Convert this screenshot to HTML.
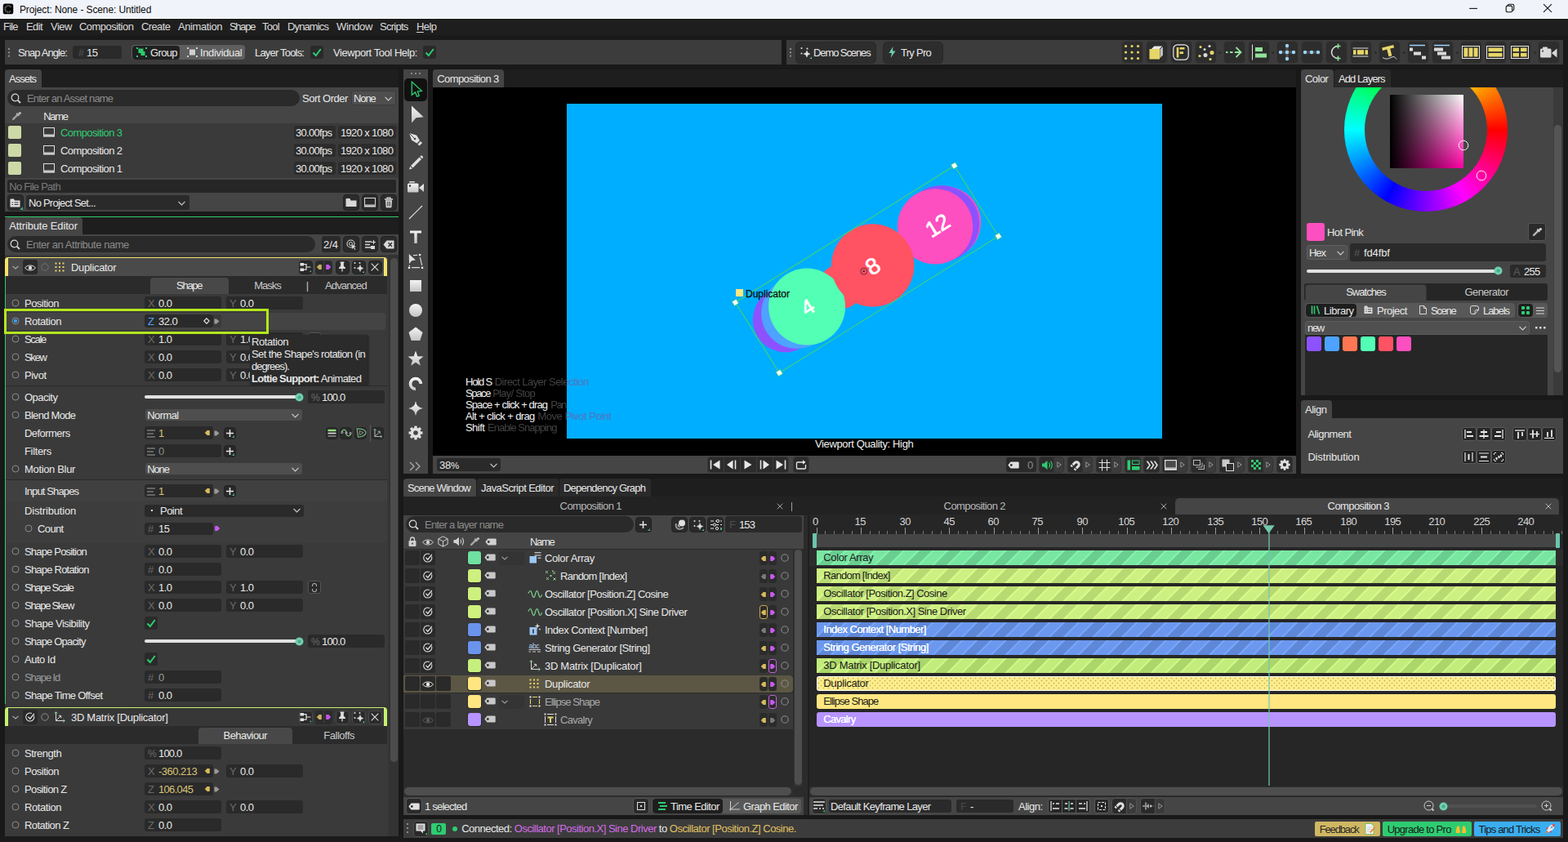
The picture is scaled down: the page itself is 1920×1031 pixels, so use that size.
<!DOCTYPE html>
<html lang="en"><head><meta charset="utf-8"><title>Project: None - Scene: Untitled</title>
<style>
*{box-sizing:border-box;margin:0;padding:0}
html,body{width:1920px;height:1031px;overflow:hidden;background:#191919}
body{font:13px "Liberation Sans",sans-serif;letter-spacing:-0.5px;color:#e8e8e8;position:relative}
.a{position:absolute;display:block}
.t{position:absolute;white-space:nowrap;line-height:20px;height:20px}
u{text-decoration:underline;text-underline-offset:2px}
b{font-weight:bold}
</style></head><body>
<!-- s_top -->
<div class="a" style="left:0px;top:0px;width:1920px;height:23px;background:#f0f3f9"></div>
<div class="a" style="left:0px;top:22px;width:1920px;height:1px;background:#fdfdfe"></div>
<svg class="a" style="left:3px;top:4px" width="14" height="14" viewBox="0 0 14 14"><rect x="0.75" y="0.5" width="12.5" height="12.800" rx="2.600" fill="#050505"/><path d="M10.300 4.600A3.900 3.900 0 1 0 10.300 9.300" fill="none" stroke="#8a8a8a" stroke-width="1.900" stroke-dasharray="0.9 0.7"/></svg>
<div class="t" style="top:2px;left:23.9px;color:#0a0a0a;font-size:12px;letter-spacing:-0.11px">Project: None - Scene: Untitled</div>
<svg class="a" style="left:1798px;top:4px" width="12" height="12" viewBox="0 0 12 12"><path d="M1.2 6.4H11" stroke="#111" stroke-width="1.1" fill="none"/></svg>
<svg class="a" style="left:1843px;top:4px" width="12" height="12" viewBox="0 0 12 12"><rect x="1.2" y="3.1" width="7.5" height="7.700" rx="1.600" fill="none" stroke="#111" stroke-width="1.1"/><path d="M3.400 3V2.600A1.400 1.400 0 0 1 4.800 1.200H8.900A1.900 1.900 0 0 1 10.800 3.100V7.300A1.500 1.500 0 0 1 9.300 8.800H8.900" fill="none" stroke="#111" stroke-width="1.1"/></svg>
<svg class="a" style="left:1889px;top:4px" width="12" height="12" viewBox="0 0 12 12"><path d="M1.100 1.100L10.900 10.900M10.900 1.100L1.100 10.900" stroke="#111" stroke-width="1.1" fill="none"/></svg>
<div class="a" style="left:0px;top:23px;width:1920px;height:20px;background:#1e1e1e"></div>
<div class="t" style="top:23px;left:4px;color:#dcdcdc;letter-spacing:-0.8px">File</div>
<div class="t" style="top:23px;left:32px;color:#dcdcdc;letter-spacing:-0.6px">Edit</div>
<div class="t" style="top:23px;left:62px;color:#dcdcdc;letter-spacing:-0.5px">View</div>
<div class="t" style="top:23px;left:97px;color:#dcdcdc;letter-spacing:-0.54px">Composition</div>
<div class="t" style="top:23px;left:173px;color:#dcdcdc;letter-spacing:-0.62px">Create</div>
<div class="t" style="top:23px;left:218px;color:#dcdcdc;letter-spacing:-0.42px">Animation</div>
<div class="t" style="top:23px;left:281px;color:#dcdcdc;letter-spacing:-1.3px">Shape</div>
<div class="t" style="top:23px;left:321px;color:#dcdcdc;letter-spacing:-0.73px">Tool</div>
<div class="t" style="top:23px;left:352px;color:#dcdcdc;letter-spacing:-0.87px">Dynamics</div>
<div class="t" style="top:23px;left:412px;color:#dcdcdc;letter-spacing:-0.38px">Window</div>
<div class="t" style="top:23px;left:465px;color:#dcdcdc;letter-spacing:-0.73px">Scripts</div>
<div class="t" style="top:23px;left:510px;color:#dcdcdc;letter-spacing:-0.57px"><u>H</u>elp</div>
<div class="a" style="left:6px;top:49px;width:951px;height:30px;background:#3c3c3c"></div>
<div class="a" style="left:963px;top:49px;width:951px;height:30px;background:#3c3c3c"></div>
<svg class="a" style="left:10px;top:59px" width="3" height="14" viewBox="0 0 3 14"><rect x="0" y="0" width="2" height="2" fill="#8a8a8a"/><rect x="0" y="4.300" width="2" height="2" fill="#8a8a8a"/><rect x="0" y="8.600" width="2" height="2" fill="#8a8a8a"/></svg>
<svg class="a" style="left:967px;top:59px" width="3" height="14" viewBox="0 0 3 14"><rect x="0" y="0" width="2" height="2" fill="#8a8a8a"/><rect x="0" y="4.300" width="2" height="2" fill="#8a8a8a"/><rect x="0" y="8.600" width="2" height="2" fill="#8a8a8a"/></svg>
<div class="t" style="top:55px;left:22px;color:#e8e8e8;letter-spacing:-0.92px">Snap Angle:</div>
<div class="a" style="left:89px;top:56px;width:60px;height:16px;background:#2a2a2a;border-radius:3px"></div>
<div class="t" style="top:55px;left:96px;color:#585858;font-size:12px">#</div>
<div class="t" style="top:55px;left:106px;color:#e8e8e8">15</div>
<div class="a" style="left:161px;top:55px;width:139px;height:18px;background:#5e5e5e;border-radius:4px"></div>
<div class="a" style="left:161.5px;top:55.5px;width:58.5px;height:17px;background:#202020;border-radius:4px"></div>
<svg class="a" style="left:167px;top:58px" width="13" height="12" viewBox="0 0 13 12"><rect x="2.5" y="1.5" width="6" height="5.5" fill="#2ecc71"/><rect x="5.5" y="5" width="5" height="5" fill="#2ecc71"/><rect x="0" y="0" width="2" height="2" fill="#2ecc71"/><rect x="11" y="0" width="2" height="2" fill="#2ecc71"/><rect x="0" y="10" width="2" height="2" fill="#2ecc71"/><rect x="11" y="10" width="2" height="2" fill="#2ecc71"/></svg>
<div class="t" style="top:55px;left:184px;color:#e8e8e8;letter-spacing:-0.65px">Group</div>
<svg class="a" style="left:229px;top:58px" width="13" height="12" viewBox="0 0 13 12"><rect x="3" y="2.5" width="7" height="7" fill="#d0d0d0"/><rect x="0" y="0" width="2" height="2" fill="#d0d0d0"/><rect x="11" y="0" width="2" height="2" fill="#d0d0d0"/><rect x="0" y="10" width="2" height="2" fill="#d0d0d0"/><rect x="11" y="10" width="2" height="2" fill="#d0d0d0"/></svg>
<div class="t" style="top:55px;left:245px;color:#e8e8e8;letter-spacing:-0.36px">Individual</div>
<div class="t" style="top:55px;left:312px;color:#e8e8e8;letter-spacing:-0.81px">Layer Tools:</div>
<div class="a" style="left:380px;top:56px;width:16px;height:16px;background:#2a2a2a;border-radius:3px"></div><svg class="a" style="left:382px;top:58px" width="12" height="12" viewBox="0 0 12 12"><path d="M1.5 6.5L4.8 10L10.8 2" stroke="#2ecc71" stroke-width="2" fill="none"/></svg>
<div class="t" style="top:55px;left:408px;color:#e8e8e8;letter-spacing:-0.45px">Viewport Tool Help:</div>
<div class="a" style="left:518px;top:56px;width:16px;height:16px;background:#2a2a2a;border-radius:3px"></div><svg class="a" style="left:520px;top:58px" width="12" height="12" viewBox="0 0 12 12"><path d="M1.5 6.5L4.8 10L10.8 2" stroke="#2ecc71" stroke-width="2" fill="none"/></svg>
<div class="a" style="left:974.4px;top:50.5px;width:99px;height:27px;background:#2d2d2d;border-radius:5px;border:1px solid #282828"></div>
<svg class="a" style="left:979px;top:57px" width="15" height="15" viewBox="0 0 15 15"><path d="M9 5Q9.400 8.600 13 9Q9.400 9.400 9 13Q8.600 9.400 5 9Q8.600 8.600 9 5Z" fill="#e8e8e8" stroke="#e8e8e8" stroke-width="0.6"/><circle cx="2.500" cy="2" r="1.100" fill="#d8d8d8"/><circle cx="9.500" cy="2.500" r="1.100" fill="#d8d8d8"/><circle cx="2.500" cy="8.500" r="1.100" fill="#d8d8d8"/><path d="M15 15V12.500L12.500 15Z" fill="#5cc8a4"/></svg>
<div class="t" style="top:55px;left:996px;color:#e8e8e8;letter-spacing:-1.09px">Demo Scenes</div>
<div class="a" style="left:1081.4px;top:50.5px;width:74px;height:27px;background:#2d2d2d;border-radius:5px;border:1px solid #282828"></div>
<svg class="a" style="left:1088px;top:57px" width="9" height="14" viewBox="0 0 9 14"><path d="M5.5 0L0.5 8H4L2.5 14L8.5 5.5H5Z" fill="#6fcfb0"/></svg>
<div class="t" style="top:55px;left:1103px;color:#e8e8e8;letter-spacing:-0.73px">Try Pro</div>
<div class="a" style="left:1372.5px;top:50px;width:27px;height:28px;background:#2d2d2d;border-radius:5px;border:1px solid #383838"></div>
<svg class="a" style="left:1375px;top:53px" width="22" height="22" viewBox="0 0 22 22"><circle cx="3.5" cy="3.5" r="1.6" fill="#e6d668"/><circle cx="3.5" cy="11.0" r="1.6" fill="#e6d668"/><circle cx="3.5" cy="18.5" r="1.6" fill="#e6d668"/><circle cx="11.0" cy="3.5" r="1.6" fill="#e6d668"/><circle cx="11.0" cy="11.0" r="1.6" fill="#e6d668"/><circle cx="11.0" cy="18.5" r="1.6" fill="#e6d668"/><circle cx="18.5" cy="3.5" r="1.6" fill="#e6d668"/><circle cx="18.5" cy="11.0" r="1.6" fill="#e6d668"/><circle cx="18.5" cy="18.5" r="1.6" fill="#e6d668"/></svg>
<div class="a" style="left:1402.5px;top:50px;width:27px;height:28px;background:#2d2d2d;border-radius:5px;border:1px solid #383838"></div>
<svg class="a" style="left:1405px;top:53px" width="22" height="22" viewBox="0 0 22 22"><path d="M3.5 7.5L8 3H19.5V15L15 19.5Z" fill="#2a2a2a"/><path d="M4.8 7L8.3 3.6H18.2L14.8 7Z" fill="#e8e8e8"/><path d="M15.4 7.6L18.9 4.2V14.6L15.4 18.2Z" fill="#c4c4c4"/><rect x="2.5" y="7" width="12.5" height="12.5" fill="#e6d668"/></svg>
<div class="a" style="left:1432.5px;top:50px;width:27px;height:28px;background:#2d2d2d;border-radius:5px;border:1px solid #383838"></div>
<svg class="a" style="left:1435px;top:53px" width="22" height="22" viewBox="0 0 22 22"><rect x="1.8" y="1.8" width="18.4" height="18.4" rx="5" fill="none" stroke="#e8e8e8" stroke-width="1.2"/><path d="M7 5V17.5" stroke="#e6d668" stroke-width="2.6" fill="none"/><path d="M9.5 6.3H15.5M9.5 11.6H14" stroke="#e6d668" stroke-width="2.6" fill="none"/></svg>
<div class="a" style="left:1462.5px;top:50px;width:27px;height:28px;background:#2d2d2d;border-radius:5px;border:1px solid #383838"></div>
<svg class="a" style="left:1465px;top:53px" width="22" height="22" viewBox="0 0 22 22"><circle cx="5" cy="4.5" r="1.5" fill="#e6d668"/><circle cx="16" cy="3.5" r="1.6" fill="#d8d8d8"/><circle cx="10" cy="7.5" r="1.5" fill="#d8d8d8"/><circle cx="19" cy="11.5" r="2.5" fill="#e6d668"/><circle cx="4" cy="15.5" r="1.6" fill="#e6d668"/><circle cx="11" cy="14.500" r="2.5" fill="#d8d8d8"/><circle cx="17" cy="19.500" r="1.6" fill="#e6d668"/></svg>
<div class="a" style="left:1492px;top:63px;width:3px;height:3px;background:#2a2a2a;border-radius:2px"></div>
<div class="a" style="left:1497.5px;top:50px;width:27px;height:28px;background:#2d2d2d;border-radius:5px;border:1px solid #383838"></div>
<svg class="a" style="left:1500px;top:53px" width="22" height="22" viewBox="0 0 22 22"><path d="M1 11H3.5M6 11H9.5M12 11H19M13.5 5L19.5 11L13.5 17" stroke="#8fe39a" stroke-width="1.8" fill="none"/></svg>
<div class="a" style="left:1527.5px;top:50px;width:27px;height:28px;background:#2d2d2d;border-radius:5px;border:1px solid #383838"></div>
<svg class="a" style="left:1530px;top:53px" width="22" height="22" viewBox="0 0 22 22"><path d="M3.5 1.5V20.500" stroke="#e0e0e0" stroke-width="1"/><rect x="7" y="5" width="9" height="5" fill="#8fe39a"/><rect x="7" y="12.500" width="14" height="5" fill="#8fe39a"/></svg>
<div class="a" style="left:1557px;top:63px;width:3px;height:3px;background:#2a2a2a;border-radius:2px"></div>
<div class="a" style="left:1562.5px;top:50px;width:27px;height:28px;background:#2d2d2d;border-radius:5px;border:1px solid #383838"></div>
<svg class="a" style="left:1565px;top:53px" width="22" height="22" viewBox="0 0 22 22"><path d="M11 3V19M3 11H19" stroke="#4c4c4c" stroke-width="3.5"/><circle cx="11" cy="3" r="2.200" fill="#9cd4ff"/><circle cx="11" cy="19" r="2.200" fill="#9cd4ff"/><circle cx="3" cy="11" r="2.200" fill="#9cd4ff"/><circle cx="19" cy="11" r="2.200" fill="#9cd4ff"/><circle cx="11" cy="11" r="2.200" fill="#9cd4ff"/></svg>
<div class="a" style="left:1592.5px;top:50px;width:27px;height:28px;background:#2d2d2d;border-radius:5px;border:1px solid #383838"></div>
<svg class="a" style="left:1595px;top:53px" width="22" height="22" viewBox="0 0 22 22"><path d="M3 11H19" stroke="#4c4c4c" stroke-width="3.500"/><circle cx="3" cy="11" r="2.200" fill="#9cd4ff"/><circle cx="11" cy="11" r="2.200" fill="#9cd4ff"/><circle cx="19" cy="11" r="2.200" fill="#9cd4ff"/></svg>
<div class="a" style="left:1622.5px;top:50px;width:27px;height:28px;background:#2d2d2d;border-radius:5px;border:1px solid #383838"></div>
<svg class="a" style="left:1625px;top:53px" width="22" height="22" viewBox="0 0 22 22"><path d="M13.500 3.500A8 7.500 0 0 0 13.500 18.500" stroke="#e0e0e0" stroke-width="1.500" fill="none"/><path d="M13.500 0.5V6.500M10.500 3.500H16.500M13.500 15.500V21.500M10.500 18.500H16.500" stroke="#8fe39a" stroke-width="1.500"/></svg>
<div class="a" style="left:1652.5px;top:50px;width:27px;height:28px;background:#2d2d2d;border-radius:5px;border:1px solid #383838"></div>
<svg class="a" style="left:1655px;top:53px" width="22" height="22" viewBox="0 0 22 22"><path d="M1.500 6H20.500M1.500 16H20.500" stroke="#e0e0e0" stroke-width="1"/><rect x="2" y="8.200" width="3.500" height="5.600" fill="#e6d668"/><rect x="7" y="8.200" width="8" height="5.600" fill="#e6d668"/><rect x="16.500" y="8.200" width="3.500" height="5.600" fill="#e6d668"/></svg>
<div class="a" style="left:1683px;top:63px;width:3px;height:3px;background:#2a2a2a;border-radius:2px"></div>
<div class="a" style="left:1687.5px;top:50px;width:27px;height:28px;background:#2d2d2d;border-radius:5px;border:1px solid #383838"></div>
<svg class="a" style="left:1690px;top:53px" width="22" height="22" viewBox="0 0 22 22"><g transform="rotate(-14 11 10)"><path d="M3.500 3.500H18V7H13V16H9V7H3.500Z" fill="#e6d668"/></g><path d="M3 17.500C7 20 10 19 13 17.500S18 16 20 19.500" stroke="#e0e0e0" stroke-width="1" fill="none"/></svg>
<div class="a" style="left:1718px;top:63px;width:3px;height:3px;background:#2a2a2a;border-radius:2px"></div>
<div class="a" style="left:1722.5px;top:50px;width:27px;height:28px;background:#2d2d2d;border-radius:5px;border:1px solid #383838"></div>
<svg class="a" style="left:1725px;top:53px" width="22" height="22" viewBox="0 0 22 22"><path d="M1 2.500H20" stroke="#9cd4ff" stroke-width="1.500"/><rect x="1" y="5.500" width="4" height="4" fill="#d8d8d8"/><rect x="6" y="10.500" width="9" height="4" fill="#d8d8d8"/><rect x="16" y="15.500" width="5" height="4" fill="#d8d8d8"/></svg>
<div class="a" style="left:1752.5px;top:50px;width:27px;height:28px;background:#2d2d2d;border-radius:5px;border:1px solid #383838"></div>
<svg class="a" style="left:1755px;top:53px" width="22" height="22" viewBox="0 0 22 22"><path d="M1 2.500H20" stroke="#9cd4ff" stroke-width="1.500"/><rect x="1" y="5.500" width="11" height="4" fill="#d8d8d8"/><rect x="5" y="10.500" width="11" height="4" fill="#d8d8d8"/><rect x="10" y="15.500" width="11" height="4" fill="#d8d8d8"/></svg>
<div class="a" style="left:1783px;top:63px;width:3px;height:3px;background:#2a2a2a;border-radius:2px"></div>
<div class="a" style="left:1787.5px;top:50px;width:27px;height:28px;background:#2d2d2d;border-radius:5px;border:1px solid #383838"></div>
<svg class="a" style="left:1790px;top:53px" width="22" height="22" viewBox="0 0 22 22"><rect x="0.5" y="3.500" width="21" height="15" fill="none" stroke="#e8e8e8" stroke-width="1"/><rect x="2.500" y="5.500" width="4.800" height="11" fill="#e6d668"/><rect x="8.600" y="5.500" width="4.800" height="11" fill="#e6d668"/><rect x="14.700" y="5.500" width="4.800" height="11" fill="#e6d668"/></svg>
<div class="a" style="left:1817.5px;top:50px;width:27px;height:28px;background:#2d2d2d;border-radius:5px;border:1px solid #383838"></div>
<svg class="a" style="left:1820px;top:53px" width="22" height="22" viewBox="0 0 22 22"><rect x="0.5" y="3.500" width="21" height="15" fill="none" stroke="#e8e8e8" stroke-width="1"/><rect x="2.500" y="5.500" width="17" height="4.600" fill="#e6d668"/><rect x="2.500" y="11.900" width="17" height="4.600" fill="#e6d668"/></svg>
<div class="a" style="left:1847.5px;top:50px;width:27px;height:28px;background:#2d2d2d;border-radius:5px;border:1px solid #383838"></div>
<svg class="a" style="left:1850px;top:53px" width="22" height="22" viewBox="0 0 22 22"><rect x="0.5" y="3.500" width="21" height="15" fill="none" stroke="#e8e8e8" stroke-width="1"/><rect x="2.500" y="5.500" width="7.500" height="4.600" fill="#e6d668"/><rect x="12" y="5.500" width="7.500" height="4.600" fill="#e6d668"/><rect x="2.500" y="11.900" width="7.500" height="4.600" fill="#e6d668"/><rect x="12" y="11.900" width="7.500" height="4.600" fill="#e6d668"/></svg>
<div class="a" style="left:1878px;top:63px;width:3px;height:3px;background:#2a2a2a;border-radius:2px"></div>
<div class="a" style="left:1882.5px;top:50px;width:27px;height:28px;background:#2d2d2d;border-radius:5px;border:1px solid #383838"></div>
<svg class="a" style="left:1885px;top:53px" width="22" height="22" viewBox="0 0 22 22"><path d="M2.500 6.500H13Q14.500 6.500 14.500 8V16Q14.500 17.500 13 17.500H2.500Q1 17.500 1 16V8Q1 6.500 2.500 6.500Z" fill="#d8d8d8"/><path d="M15 12L21.500 6.500V17.500Z" fill="#d8d8d8"/><rect x="4" y="4.500" width="6" height="2.500" rx="1" fill="#d8d8d8"/><circle cx="4" cy="9.500" r="1" fill="#2d2d2d"/></svg>
<!-- s_left -->
<div class="a" style="left:6px;top:85px;width:482px;height:22px;background:#1e1e1e"></div>
<div class="a" style="left:6px;top:85px;width:45px;height:23px;background:#454545;border-radius:4px 4px 0 0"></div>
<div class="t" style="top:87px;left:11px;color:#e8e8e8;letter-spacing:-0.98px">Assets</div>
<div class="a" style="left:6px;top:107px;width:482px;height:152px;background:#454545"></div>
<div class="a" style="left:9px;top:110px;width:358px;height:20px;background:#2a2a2a;border-radius:10px"></div>
<svg class="a" style="left:13px;top:114px" width="13" height="13" viewBox="0 0 13 13"><circle cx="5.5" cy="5.5" r="4.3" fill="none" stroke="#d8d8d8" stroke-width="1.2"/><path d="M8.8 8.8L12 12" stroke="#d8d8d8" stroke-width="1.8"/></svg>
<div class="t" style="top:111px;left:33px;color:#8a8a8a;letter-spacing:-0.81px">Enter an Asset name</div>
<div class="t" style="top:111px;left:370px;color:#e8e8e8;letter-spacing:-0.49px">Sort Order</div>
<div class="a" style="left:430px;top:111px;width:55px;height:18px;background:#4e4e4e;border-radius:3px;border:1px solid #3c3c3c"></div>
<div class="t" style="top:111px;left:433px;color:#e8e8e8;letter-spacing:-1.1px">None</div>
<svg class="a" style="left:471px;top:118px" width="9" height="6" viewBox="0 0 9 6"><path d="M0.5 0.8L4.5 5L8.5 0.8" fill="none" stroke="#d0d0d0" stroke-width="1.1"/></svg>
<svg class="a" style="left:14px;top:136px" width="12" height="12" viewBox="0 0 12 12"><path d="M0.8 11.200L1.300 9L6.800 3.500L8.500 5.200L3 10.700Z" fill="#b0b0b0" opacity="0.85"/><path d="M6.200 2.600L9.400 5.800" stroke="#b0b0b0" stroke-width="1.700"/><path d="M7.600 4.400L9.600 2Q10.500 1.100 11.200 1.800Q11.900 2.500 11 3.400Z" fill="#b0b0b0" stroke="#b0b0b0" stroke-width="1.200"/></svg>
<div class="t" style="top:133px;left:53.2px;color:#e8e8e8;letter-spacing:-1.3px">Name</div>
<div class="a" style="left:6px;top:151px;width:482px;height:67px;background:#3a3a3a"></div>
<div class="a" style="left:10px;top:154px;width:16px;height:16px;background:#cdd9a6;border-radius:2px"></div>
<svg class="a" style="left:53px;top:156px" width="14" height="12" viewBox="0 0 14 12"><rect x="0.5" y="0.5" width="13" height="8.5" fill="none" stroke="#e0e0e0" stroke-width="1"/><rect x="0" y="9.5" width="14" height="2" fill="#e0e0e0"/></svg>
<div class="t" style="top:153px;left:74px;color:#2ecc71;letter-spacing:-0.59px">Composition 3</div>
<div class="a" style="left:360px;top:154px;width:51px;height:16px;background:#2c2c2c;border-radius:3px"></div>
<div class="t" style="top:153px;left:362px;color:#e8e8e8;letter-spacing:-0.7px">30.00fps</div>
<div class="a" style="left:414px;top:154px;width:71px;height:16px;background:#2c2c2c;border-radius:3px"></div>
<div class="t" style="top:153px;left:417px;color:#e8e8e8;letter-spacing:-0.67px">1920 x 1080</div>
<div class="a" style="left:10px;top:176px;width:16px;height:16px;background:#cdd9a6;border-radius:2px"></div>
<svg class="a" style="left:53px;top:178px" width="14" height="12" viewBox="0 0 14 12"><rect x="0.5" y="0.5" width="13" height="8.5" fill="none" stroke="#e0e0e0" stroke-width="1"/><rect x="0" y="9.5" width="14" height="2" fill="#e0e0e0"/></svg>
<div class="t" style="top:175px;left:74px;color:#e8e8e8;letter-spacing:-0.59px">Composition 2</div>
<div class="a" style="left:360px;top:176px;width:51px;height:16px;background:#2c2c2c;border-radius:3px"></div>
<div class="t" style="top:175px;left:362px;color:#e8e8e8;letter-spacing:-0.7px">30.00fps</div>
<div class="a" style="left:414px;top:176px;width:71px;height:16px;background:#2c2c2c;border-radius:3px"></div>
<div class="t" style="top:175px;left:417px;color:#e8e8e8;letter-spacing:-0.67px">1920 x 1080</div>
<div class="a" style="left:10px;top:198px;width:16px;height:16px;background:#cdd9a6;border-radius:2px"></div>
<svg class="a" style="left:53px;top:200px" width="14" height="12" viewBox="0 0 14 12"><rect x="0.5" y="0.5" width="13" height="8.5" fill="none" stroke="#e0e0e0" stroke-width="1"/><rect x="0" y="9.5" width="14" height="2" fill="#e0e0e0"/></svg>
<div class="t" style="top:197px;left:74px;color:#e8e8e8;letter-spacing:-0.59px">Composition 1</div>
<div class="a" style="left:360px;top:198px;width:51px;height:16px;background:#2c2c2c;border-radius:3px"></div>
<div class="t" style="top:197px;left:362px;color:#e8e8e8;letter-spacing:-0.7px">30.00fps</div>
<div class="a" style="left:414px;top:198px;width:71px;height:16px;background:#2c2c2c;border-radius:3px"></div>
<div class="t" style="top:197px;left:417px;color:#e8e8e8;letter-spacing:-0.67px">1920 x 1080</div>
<div class="a" style="left:9px;top:220px;width:476px;height:16px;background:#262626;border-radius:2px"></div>
<div class="t" style="top:219px;left:11.3px;color:#7a7a7a;letter-spacing:-0.74px">No File Path</div>
<div class="a" style="left:9px;top:238px;width:20px;height:20px;background:#2b2b2b;border-radius:4px;border:1px solid #222"></div>
<svg class="a" style="left:12px;top:242px" width="13" height="12" viewBox="0 0 13 12"><path d="M0.5 2.5V11.5H12.5V3.5H6L5 1.5H1.5Q0.5 1.5 0.5 2.5Z" fill="#e0e0e0"/><path d="M2.5 6H4M5.5 6H10.5M2.5 8.5H4M5.5 8.5H10.5" stroke="#333" stroke-width="1"/></svg>
<svg class="a" style="left:24px;top:253px" width="4" height="4" viewBox="0 0 4 4"><path d="M4 0V4H0Z" fill="#3fae85"/></svg>
<div class="a" style="left:32px;top:239px;width:200px;height:18px;background:#2a2a2a;border-radius:3px"></div>
<div class="t" style="top:239px;left:35px;color:#e8e8e8;letter-spacing:-0.76px">No Project Set...</div>
<svg class="a" style="left:218px;top:246px" width="9" height="6" viewBox="0 0 9 6"><path d="M0.5 0.8L4.5 5L8.5 0.8" fill="none" stroke="#d0d0d0" stroke-width="1.1"/></svg>
<div class="a" style="left:420px;top:238px;width:20px;height:20px;background:#2b2b2b;border-radius:4px;border:1px solid #222"></div>
<div class="a" style="left:443px;top:238px;width:20px;height:20px;background:#2b2b2b;border-radius:4px;border:1px solid #222"></div>
<div class="a" style="left:466px;top:238px;width:20px;height:20px;background:#2b2b2b;border-radius:4px;border:1px solid #222"></div>
<svg class="a" style="left:423px;top:242px" width="14" height="12" viewBox="0 0 14 12"><path d="M0.5 2V11H13.5V3.5H6.5L5.5 1H1.5Q0.5 1 0.5 2Z" fill="#d8d8d8"/></svg>
<svg class="a" style="left:446px;top:242px" width="14" height="12" viewBox="0 0 14 12"><rect x="0.5" y="0.5" width="13" height="8.5" fill="none" stroke="#d8d8d8" stroke-width="1"/><rect x="0" y="9.5" width="14" height="2" fill="#d8d8d8"/></svg>
<svg class="a" style="left:470px;top:241px" width="12" height="14" viewBox="0 0 12 14"><path d="M1 3H11M4 3V1.2H8V3" stroke="#d8d8d8" stroke-width="1.3" fill="none"/><path d="M2 4.2H10L9.3 13.2H2.7Z" fill="#d8d8d8"/><path d="M4.4 5.8V11.5M6 5.8V11.5M7.6 5.8V11.5" stroke="#333" stroke-width="0.8"/></svg>
<div class="a" style="left:6px;top:265px;width:482px;height:1px;background:#2ecc71"></div>
<div class="a" style="left:6px;top:266px;width:482px;height:22px;background:#1e1e1e"></div>
<div class="a" style="left:6px;top:266px;width:95px;height:21px;background:#454545;border-radius:4px 4px 0 0"></div>
<div class="t" style="top:267px;left:11.3px;color:#e8e8e8;letter-spacing:-0.15px">Attribute Editor</div>
<div class="a" style="left:6px;top:287px;width:482px;height:737px;background:#454545"></div>
<div class="a" style="left:6px;top:312px;width:482px;height:712px;background:#383838"></div>
<div class="a" style="left:9px;top:289px;width:377px;height:20px;background:#2a2a2a;border-radius:10px"></div>
<svg class="a" style="left:12px;top:293px" width="13" height="13" viewBox="0 0 13 13"><circle cx="5.5" cy="5.5" r="4.3" fill="none" stroke="#d8d8d8" stroke-width="1.2"/><path d="M8.8 8.8L12 12" stroke="#d8d8d8" stroke-width="1.8"/></svg>
<div class="t" style="top:290px;left:32px;color:#8a8a8a;letter-spacing:-0.47px">Enter an Attribute name</div>
<div class="a" style="left:394px;top:289px;width:23px;height:20px;background:#2a2a2a;border-radius:3px"></div>
<div class="t" style="top:290px;left:396px;color:#e8e8e8;letter-spacing:-0.05px">2/4</div>
<div class="a" style="left:420px;top:289px;width:20px;height:20px;background:#2b2b2b;border-radius:4px;border:1px solid #222"></div>
<div class="a" style="left:443px;top:289px;width:20px;height:20px;background:#2b2b2b;border-radius:4px;border:1px solid #222"></div>
<div class="a" style="left:466px;top:289px;width:20px;height:20px;background:#2b2b2b;border-radius:4px;border:1px solid #222"></div>
<svg class="a" style="left:424px;top:293px" width="13" height="13" viewBox="0 0 13 13"><circle cx="5.5" cy="5.5" r="4.5" fill="none" stroke="#d8d8d8" stroke-width="1.1"/><circle cx="5.5" cy="5.5" r="2" fill="none" stroke="#d8d8d8" stroke-width="1"/><path d="M6.5 6.5L12 9L9.5 9.8L11.5 12.5L10.5 13L8.8 10.3L7 12Z" fill="#d8d8d8"/></svg>
<svg class="a" style="left:447px;top:294px" width="13" height="12" viewBox="0 0 13 12"><path d="M0 2H8M0 5.5H6M0 9H8" stroke="#d8d8d8" stroke-width="1.5"/><path d="M10.5 0V5M8 2.5H13" stroke="#d8d8d8" stroke-width="1.2"/><rect x="7" y="7" width="5" height="4" fill="#d8d8d8"/></svg>
<svg class="a" style="left:469px;top:294px" width="14" height="11" viewBox="0 0 14 11"><path d="M0.5 5.5L4.5 0.5H13Q13.5 0.5 13.5 1V10Q13.5 10.5 13 10.5H4.5Z" fill="#d8d8d8"/><path d="M6.5 3L11 8M11 3L6.5 8" stroke="#2e2e2e" stroke-width="1.3"/></svg>
<div class="a" style="left:476px;top:312px;width:12px;height:712px;background:#333"></div>
<div class="a" style="left:478px;top:316px;width:9px;height:617px;background:#4c4c4c;border-radius:5px"></div>
<div class="a" style="left:6px;top:315px;width:468px;height:23px;background:#4a4a4a;border-radius:4px 4px 0 0;border-top:1px solid #f5e26b;border-left:4px solid #f5e26b;border-right:4px solid #f5e26b"></div><svg class="a" style="left:15px;top:325px" width="8" height="5" viewBox="0 0 8 5"><path d="M0.5 0.8L4.0 4L7.5 0.8" fill="none" stroke="#b0b0b0" stroke-width="1.1"/></svg><div class="a" style="left:28px;top:318px;width:18px;height:18px;background:#2a2a2a;border-radius:3px"></div><svg class="a" style="left:30px;top:323px;opacity:1" width="14" height="10" viewBox="0 0 14 10"><path d="M0.6 5C3 1 11 1 13.4 5C11 9 3 9 0.6 5Z" fill="none" stroke="#e0e0e0" stroke-width="1"/><circle cx="7" cy="5" r="2.2" fill="#e0e0e0"/></svg><svg class="a" style="left:50px;top:322px" width="10" height="10" viewBox="0 0 10 10"><circle cx="5" cy="5" r="4.2" fill="none" stroke="#707070" stroke-width="1"/></svg><svg class="a" style="left:67px;top:321px" width="12" height="12" viewBox="0 0 12 12"><rect x="0.5" y="0.5" width="2" height="2" fill="#e6d36c"/><rect x="0.5" y="5.0" width="2" height="2" fill="#e6d36c"/><rect x="0.5" y="9.5" width="2" height="2" fill="#e6d36c"/><rect x="5.0" y="0.5" width="2" height="2" fill="#e6d36c"/><rect x="5.0" y="5.0" width="2" height="2" fill="#e6d36c"/><rect x="5.0" y="9.5" width="2" height="2" fill="#e6d36c"/><rect x="9.5" y="0.5" width="2" height="2" fill="#e6d36c"/><rect x="9.5" y="5.0" width="2" height="2" fill="#e6d36c"/><rect x="9.5" y="9.5" width="2" height="2" fill="#e6d36c"/></svg><div class="t" style="top:318px;left:87px;color:#e8e8e8;letter-spacing:-0.33px">Duplicator</div><div class="a" style="left:365.5px;top:318.5px;width:17px;height:17px;background:#2a2a2a;border-radius:4px;border:1px solid #222"></div><svg class="a" style="left:367px;top:321px" width="14" height="12" viewBox="0 0 14 12"><rect x="0.5" y="1" width="4.5" height="3.5" fill="#e0e0e0"/><rect x="0.5" y="7.5" width="4.5" height="3.5" fill="#e0e0e0"/><path d="M5 2.7H8V9.2H5M8 6H13.5" stroke="#e0e0e0" stroke-width="1.2" fill="none"/><path d="M14 12V10L12 12Z" fill="#5cc8a4"/></svg><div class="a" style="left:386px;top:318.5px;width:21px;height:17px;background:#2c2c2c;border-radius:4px"></div><div class="a" style="left:396px;top:319px;width:1px;height:16px;background:#3c3c3c"></div><svg class="a" style="left:387px;top:323px" width="8" height="8" viewBox="0 0 8 8"><path d="M0.800 4L3.700 1H6.300Q6.800 1 6.800 1.500V6.500Q6.800 7 6.300 7H3.700Z" fill="#c8b060"/></svg><svg class="a" style="left:398px;top:323px" width="8" height="8" viewBox="0 0 8 8"><path d="M7.200 4L4.300 1H1.700Q1.200 1 1.200 1.500V6.500Q1.200 7 1.700 7H4.300Z" fill="#c455ea"/></svg><div class="a" style="left:410.5px;top:318.5px;width:17px;height:17px;background:#2a2a2a;border-radius:4px;border:1px solid #222"></div><svg class="a" style="left:414px;top:320px" width="10" height="13" viewBox="0 0 10 13"><path d="M2.5 0.5H7.5V1.5L6.8 2.2V5.5L9 8V9H1V8L3.2 5.5V2.2L2.5 1.5Z" fill="#e0e0e0"/><path d="M5 9V12.5" stroke="#e0e0e0" stroke-width="1.2"/></svg><div class="a" style="left:430.5px;top:318.5px;width:17px;height:17px;background:#2a2a2a;border-radius:4px;border:1px solid #222"></div><svg class="a" style="left:432px;top:320px" width="14" height="14" viewBox="0 0 14 14"><path d="M9 4.500Q9.400 8.100 13 8.500Q9.400 8.900 9 12.500Q8.600 8.900 5 8.500Q8.600 8.100 9 4.500Z" fill="#e0e0e0" stroke="#e0e0e0" stroke-width="0.5"/><circle cx="2.500" cy="2" r="1" fill="#e0e0e0"/><circle cx="8.500" cy="2" r="1" fill="#e0e0e0"/><circle cx="2.500" cy="8" r="1" fill="#e0e0e0"/><path d="M14 14V11.800L11.800 14Z" fill="#5cc8a4"/></svg><div class="a" style="left:450.5px;top:318.5px;width:17px;height:17px;background:#2a2a2a;border-radius:4px;border:1px solid #222"></div><svg class="a" style="left:454px;top:322px" width="10" height="10" viewBox="0 0 10 10"><path d="M0.7 0.7L9.3 9.3M9.3 0.7L0.7 9.3" stroke="#e0e0e0" stroke-width="1.1" fill="none"/></svg>
<div class="a" style="left:6px;top:338px;width:1px;height:524px;background:#2ecc71"></div>
<div class="a" style="left:7px;top:338px;width:467px;height:22px;background:#2b2b2b"></div>
<div class="a" style="left:184px;top:340px;width:96px;height:20px;background:#484848;border-radius:4px 4px 0 0"></div>
<div class="t" style="top:340px;left:31.65px;width:400px;text-align:center;color:#e8e8e8;letter-spacing:-1.3px">Shape</div>
<div class="t" style="top:340px;left:127.51px;width:400px;text-align:center;color:#c8c8c8;letter-spacing:-1.03px">Masks</div>
<div class="t" style="top:340px;left:176.25px;width:400px;text-align:center;color:#c8c8c8">|</div>
<div class="t" style="top:340px;left:223.44px;width:400px;text-align:center;color:#c8c8c8;letter-spacing:-0.89px">Advanced</div>
<div class="a" style="left:7px;top:360px;width:467px;height:502px;background:#3a3a3a;border-radius:0 0 4px 4px"></div>
<svg class="a" style="left:14px;top:366px" width="10" height="10" viewBox="0 0 10 10"><circle cx="5" cy="5" r="4" fill="none" stroke="#8a8a8a" stroke-width="1"/></svg><div class="t" style="top:362px;left:30px;color:#e8e8e8;letter-spacing:-0.54px">Position</div>
<div class="a" style="left:177px;top:363px;width:94px;height:16px;background:#2a2a2a;border-radius:3px"></div><div class="t" style="top:362px;left:181px;color:#6a6a6a">X</div><div class="t" style="top:362px;left:194px;color:#e8e8e8">0.0</div><div class="a" style="left:277px;top:363px;width:94px;height:16px;background:#2a2a2a;border-radius:3px"></div><div class="t" style="top:362px;left:281px;color:#6a6a6a">Y</div><div class="t" style="top:362px;left:294px;color:#e8e8e8">0.0</div>
<div class="a" style="left:7px;top:383px;width:465px;height:21px;background:#444;border-radius:3px"></div>
<svg class="a" style="left:14px;top:388px" width="10" height="10" viewBox="0 0 10 10"><circle cx="5" cy="5" r="4" fill="none" stroke="#8a8a8a" stroke-width="1"/><circle cx="5" cy="5" r="2.2" fill="#3aa0ff"/></svg><div class="t" style="top:384px;left:30px;color:#e8e8e8;letter-spacing:-0.43px">Rotation</div>
<div class="a" style="left:177px;top:385px;width:84px;height:16px;background:#2a2a2a;border-radius:3px"></div>
<div class="t" style="top:384px;left:181px;color:#4aa8ff">Z</div>
<div class="t" style="top:384px;left:194px;color:#e8e8e8">32.0</div>
<svg class="a" style="left:249px;top:389px" width="8" height="8" viewBox="0 0 8 8"><path d="M4 0.8L7.2 4L4 7.2L0.8 4Z" fill="none" stroke="#e0e0e0" stroke-width="1.2"/></svg>
<div class="a" style="left:261px;top:385px;width:10px;height:16px;background:#3a3a3a;border-radius:0 3px 3px 0"></div>
<svg class="a" style="left:262px;top:390px" width="7" height="7" viewBox="0 0 7 7"><path d="M0.5 0.5H3L6.5 3.5L3 6.5H0.5Z" fill="#9a9a9a"/></svg>
<svg class="a" style="left:14px;top:410px" width="10" height="10" viewBox="0 0 10 10"><circle cx="5" cy="5" r="4" fill="none" stroke="#8a8a8a" stroke-width="1"/></svg><div class="t" style="top:406px;left:30px;color:#e8e8e8;letter-spacing:-1.3px">Scale</div>
<div class="a" style="left:177px;top:407px;width:94px;height:16px;background:#2a2a2a;border-radius:3px"></div><div class="t" style="top:406px;left:181px;color:#6a6a6a">X</div><div class="t" style="top:406px;left:194px;color:#e8e8e8">1.0</div><div class="a" style="left:277px;top:407px;width:94px;height:16px;background:#2a2a2a;border-radius:3px"></div><div class="t" style="top:406px;left:281px;color:#6a6a6a">Y</div><div class="t" style="top:406px;left:294px;color:#e8e8e8">1.0</div>
<div class="a" style="left:377px;top:407px;width:16px;height:16px;background:#2a2a2a;border-radius:3px;border:1px solid #555"></div><svg class="a" style="left:381px;top:409.5px" width="8" height="11" viewBox="0 0 8 11"><path d="M1.5 4V3A2.5 2.5 0 0 1 6.5 3V4M1.5 7V8A2.5 2.5 0 0 0 6.5 8V7" fill="none" stroke="#b0b0b0" stroke-width="1.1"/></svg>
<svg class="a" style="left:14px;top:432px" width="10" height="10" viewBox="0 0 10 10"><circle cx="5" cy="5" r="4" fill="none" stroke="#8a8a8a" stroke-width="1"/></svg><div class="t" style="top:428px;left:30px;color:#e8e8e8;letter-spacing:-1.3px">Skew</div>
<div class="a" style="left:177px;top:429px;width:94px;height:16px;background:#2a2a2a;border-radius:3px"></div><div class="t" style="top:428px;left:181px;color:#6a6a6a">X</div><div class="t" style="top:428px;left:194px;color:#e8e8e8">0.0</div><div class="a" style="left:277px;top:429px;width:94px;height:16px;background:#2a2a2a;border-radius:3px"></div><div class="t" style="top:428px;left:281px;color:#6a6a6a">Y</div><div class="t" style="top:428px;left:294px;color:#e8e8e8">0.0</div>
<svg class="a" style="left:14px;top:454px" width="10" height="10" viewBox="0 0 10 10"><circle cx="5" cy="5" r="4" fill="none" stroke="#8a8a8a" stroke-width="1"/></svg><div class="t" style="top:450px;left:30px;color:#e8e8e8;letter-spacing:-0.47px">Pivot</div>
<div class="a" style="left:177px;top:451px;width:94px;height:16px;background:#2a2a2a;border-radius:3px"></div><div class="t" style="top:450px;left:181px;color:#6a6a6a">X</div><div class="t" style="top:450px;left:194px;color:#e8e8e8">0.0</div><div class="a" style="left:277px;top:451px;width:94px;height:16px;background:#2a2a2a;border-radius:3px"></div><div class="t" style="top:450px;left:281px;color:#6a6a6a">Y</div><div class="t" style="top:450px;left:294px;color:#e8e8e8">0.0</div>
<div class="a" style="left:5px;top:378px;width:324px;height:31px;border:3px solid #b4e61e"></div>
<div class="a" style="left:306px;top:410px;width:144px;height:61px;background:#2b2b2b;box-shadow:1px 1px 2px rgba(0,0,0,0.5)"></div>
<div class="t" style="top:409px;left:308px;color:#e8e8e8;letter-spacing:-0.43px">Rotation</div>
<div class="t" style="top:424px;left:308px;color:#e8e8e8;letter-spacing:-0.62px">Set the Shape's rotation (in</div>
<div class="t" style="top:439px;left:308px;color:#e8e8e8;letter-spacing:-1px">degrees).</div>
<div class="t" style="top:454px;left:308px;color:#e8e8e8;letter-spacing:-0.7px"><b>Lottie Support:</b> Animated</div>
<div class="a" style="left:7px;top:472px;width:467px;height:1px;background:#2a2a2a"></div>
<svg class="a" style="left:14px;top:481px" width="10" height="10" viewBox="0 0 10 10"><circle cx="5" cy="5" r="4" fill="none" stroke="#8a8a8a" stroke-width="1"/></svg><div class="t" style="top:477px;left:30px;color:#e8e8e8;letter-spacing:-0.53px">Opacity</div>
<div class="a" style="left:177px;top:484px;width:188px;height:4px;background:#e2e2e2;border-radius:2px"></div><svg class="a" style="left:360.5px;top:480.5px" width="11" height="11" viewBox="0 0 11 11"><circle cx="5.5" cy="5.5" r="5" fill="#6fcfb0"/><circle cx="5.5" cy="5.5" r="2" fill="#4aa88c"/></svg>
<div class="a" style="left:377px;top:478px;width:94px;height:16px;background:#2a2a2a;border-radius:3px"></div><div class="t" style="top:477px;left:381px;color:#6a6a6a;font-size:12px">%</div><div class="t" style="top:477px;left:394px;color:#e8e8e8;letter-spacing:-0.85px">100.0</div>
<svg class="a" style="left:14px;top:503px" width="10" height="10" viewBox="0 0 10 10"><circle cx="5" cy="5" r="4" fill="none" stroke="#8a8a8a" stroke-width="1"/></svg><div class="t" style="top:499px;left:30px;color:#e8e8e8;letter-spacing:-0.72px">Blend Mode</div>
<div class="a" style="left:177px;top:500px;width:194px;height:16px;background:#4e4e4e;border-radius:4px;border:1px solid #3a3a3a"></div><div class="t" style="top:499px;left:180.2px;color:#e8e8e8;letter-spacing:-0.58px">Normal</div><svg class="a" style="left:357px;top:505.5px" width="9" height="6" viewBox="0 0 9 6"><path d="M0.5 0.8L4.5 5L8.5 0.8" fill="none" stroke="#d0d0d0" stroke-width="1.1"/></svg>
<div class="t" style="top:521px;left:30px;color:#e8e8e8;letter-spacing:-0.55px">Deformers</div>
<div class="a" style="left:177px;top:522px;width:84px;height:16px;background:#2a2a2a;border-radius:3px"></div><svg class="a" style="left:180px;top:526px" width="10" height="10" viewBox="0 0 10 10"><path d="M0 1H10M0 5H8M0 9H10" stroke="#a0a0a0" stroke-width="1" fill="none"/></svg><div class="t" style="top:521px;left:194px;color:#d8c476">1</div><svg class="a" style="left:250px;top:526px" width="8" height="8" viewBox="0 0 8 8"><path d="M0.800 4L3.700 1H6.300Q6.800 1 6.800 1.500V6.500Q6.800 7 6.300 7H3.700Z" fill="#d6ba5c"/></svg><svg class="a" style="left:262px;top:527px" width="7" height="7" viewBox="0 0 7 7"><path d="M0.5 0.5H3L6.5 3.5L3 6.5H0.5Z" fill="#9a9a9a"/></svg><div class="a" style="left:273.5px;top:522.5px;width:15px;height:15px;background:#282828;border-radius:4px;border:1px solid #222"></div><svg class="a" style="left:275.5px;top:524.5px" width="11" height="11" viewBox="0 0 11 11"><path d="M5.5 1V10M1 5.5H10" stroke="#e8e8e8" stroke-width="1.5" fill="none"/></svg><svg class="a" style="left:284.0px;top:533.0px" width="3" height="3" viewBox="0 0 3 3"><path d="M3 0V3H0Z" fill="#3fae85"/></svg>
<div class="a" style="left:398.5px;top:522.5px;width:15px;height:15px;background:#2a2a2a;border-radius:4px;border:1px solid #242424"></div><div class="a" style="left:416px;top:522.5px;width:15px;height:15px;background:#2a2a2a;border-radius:4px;border:1px solid #242424"></div><div class="a" style="left:434px;top:522.5px;width:15px;height:15px;background:#2a2a2a;border-radius:4px;border:1px solid #242424"></div><div class="a" style="left:455px;top:522.5px;width:15px;height:15px;background:#2a2a2a;border-radius:4px;border:1px solid #242424"></div><svg class="a" style="left:400.5px;top:524.5px" width="11" height="11" viewBox="0 0 11 11"><path d="M0.5 2H10.500" stroke="#90e080" stroke-width="2.400"/><path d="M0.5 5.500H10.500" stroke="#e0e0e0" stroke-width="1.600"/><path d="M0.5 9H10.500" stroke="#8a8a8a" stroke-width="1.600"/></svg><svg class="a" style="left:416.5px;top:524px" width="14" height="12" viewBox="0 0 14 12"><path d="M1.500 6C1.500 1 7 1 7 6S12.500 11 12.500 6" fill="none" stroke="#6fb07a" stroke-width="1.300"/><circle cx="1.800" cy="5.500" r="1.100" fill="#2a2a2a" stroke="#e0e0e0" stroke-width="0.800"/><circle cx="7" cy="6" r="1.100" fill="#2a2a2a" stroke="#e0e0e0" stroke-width="0.800"/><circle cx="12.200" cy="6.500" r="1.100" fill="#2a2a2a" stroke="#e0e0e0" stroke-width="0.800"/></svg><svg class="a" style="left:435.5px;top:524px" width="13" height="12" viewBox="0 0 13 12"><path d="M1 0.8L2.500 11.200Q12.500 10 12 5Q11 1 1 0.8Z" fill="none" stroke="#6fb07a" stroke-width="1.200"/><path d="M4 3.500L4.500 8.500L9 5.800Z" fill="none" stroke="#8a8a8a" stroke-width="1"/></svg><div class="a" style="left:452.5px;top:519.5px;width:1px;height:21px;background:#5a5a5a"></div><svg class="a" style="left:456px;top:523.5px" width="13" height="13" viewBox="0 0 13 13"><path d="M3 2V10.500H11" fill="none" stroke="#b0b0b0" stroke-width="1.100"/><path d="M3 10.500L9 4.500M6.500 4.200H9.200V7" fill="none" stroke="#b0b0b0" stroke-width="1"/><path d="M1.300 3.200L3 1L4.700 3.200M10 8.800L12 10.500L10 12.200" fill="none" stroke="#6fb07a" stroke-width="1"/></svg>
<div class="t" style="top:543px;left:30px;color:#e8e8e8;letter-spacing:-0.35px">Filters</div>
<div class="a" style="left:177px;top:544px;width:94px;height:16px;background:#2a2a2a;border-radius:3px"></div><svg class="a" style="left:180px;top:548px" width="10" height="10" viewBox="0 0 10 10"><path d="M0 1H10M0 5H8M0 9H10" stroke="#a0a0a0" stroke-width="1" fill="none"/></svg><div class="t" style="top:543px;left:194px;color:#8a8a8a">0</div><div class="a" style="left:273.5px;top:544.5px;width:15px;height:15px;background:#282828;border-radius:4px;border:1px solid #222"></div><svg class="a" style="left:275.5px;top:546.5px" width="11" height="11" viewBox="0 0 11 11"><path d="M5.5 1V10M1 5.5H10" stroke="#e8e8e8" stroke-width="1.5" fill="none"/></svg><svg class="a" style="left:284.0px;top:555.0px" width="3" height="3" viewBox="0 0 3 3"><path d="M3 0V3H0Z" fill="#3fae85"/></svg>
<svg class="a" style="left:14px;top:569px" width="10" height="10" viewBox="0 0 10 10"><circle cx="5" cy="5" r="4" fill="none" stroke="#8a8a8a" stroke-width="1"/></svg><div class="t" style="top:565px;left:30px;color:#e8e8e8;letter-spacing:-0.34px">Motion Blur</div>
<div class="a" style="left:177px;top:566px;width:194px;height:16px;background:#4e4e4e;border-radius:4px;border:1px solid #3a3a3a"></div><div class="t" style="top:565px;left:180.2px;color:#e8e8e8;letter-spacing:-1.1px">None</div><svg class="a" style="left:357px;top:571.5px" width="9" height="6" viewBox="0 0 9 6"><path d="M0.5 0.8L4.5 5L8.5 0.8" fill="none" stroke="#d0d0d0" stroke-width="1.1"/></svg>
<div class="a" style="left:7px;top:587px;width:467px;height:1px;background:#2a2a2a"></div>
<div class="a" style="left:7px;top:588px;width:467px;height:26px;background:#404040"></div>
<div class="t" style="top:592px;left:30px;color:#e8e8e8;letter-spacing:-0.87px">Input Shapes</div>
<div class="a" style="left:177px;top:593px;width:84px;height:16px;background:#2a2a2a;border-radius:3px"></div><svg class="a" style="left:180px;top:597px" width="10" height="10" viewBox="0 0 10 10"><path d="M0 1H10M0 5H8M0 9H10" stroke="#a0a0a0" stroke-width="1" fill="none"/></svg><div class="t" style="top:592px;left:194px;color:#d8c476">1</div><svg class="a" style="left:250px;top:597px" width="8" height="8" viewBox="0 0 8 8"><path d="M0.800 4L3.700 1H6.300Q6.800 1 6.800 1.500V6.500Q6.800 7 6.300 7H3.700Z" fill="#d6ba5c"/></svg><svg class="a" style="left:262px;top:598px" width="7" height="7" viewBox="0 0 7 7"><path d="M0.5 0.5H3L6.5 3.5L3 6.5H0.5Z" fill="#9a9a9a"/></svg><div class="a" style="left:273.5px;top:593.5px;width:15px;height:15px;background:#282828;border-radius:4px;border:1px solid #222"></div><svg class="a" style="left:275.5px;top:595.5px" width="11" height="11" viewBox="0 0 11 11"><path d="M5.5 1V10M1 5.5H10" stroke="#e8e8e8" stroke-width="1.5" fill="none"/></svg><svg class="a" style="left:284.0px;top:604.0px" width="3" height="3" viewBox="0 0 3 3"><path d="M3 0V3H0Z" fill="#3fae85"/></svg>
<div class="a" style="left:7px;top:614px;width:467px;height:50px;background:#3d3d3d"></div>
<div class="t" style="top:616px;left:30px;color:#e8e8e8;letter-spacing:-0.16px">Distribution</div>
<div class="a" style="left:177px;top:618px;width:195px;height:15px;background:#2a2a2a;border-radius:3px"></div>
<div class="a" style="left:185px;top:624px;width:2px;height:2px;background:#e0e0e0"></div>
<div class="t" style="top:616px;left:196px;color:#e8e8e8;letter-spacing:-0.53px">Point</div>
<svg class="a" style="left:359px;top:622px" width="9" height="6" viewBox="0 0 9 6"><path d="M0.5 0.8L4.5 5L8.5 0.8" fill="none" stroke="#d0d0d0" stroke-width="1.1"/></svg>
<svg class="a" style="left:30px;top:642px" width="10" height="10" viewBox="0 0 10 10"><circle cx="5" cy="5" r="4" fill="none" stroke="#8a8a8a" stroke-width="1"/></svg>
<div class="t" style="top:638px;left:46px;color:#e8e8e8;letter-spacing:-0.62px">Count</div>
<div class="a" style="left:177px;top:640px;width:84px;height:15px;background:#2a2a2a;border-radius:3px"></div>
<div class="t" style="top:638px;left:181px;color:#6a6a6a">#</div>
<div class="t" style="top:638px;left:194px;color:#e8e8e8">15</div>
<svg class="a" style="left:262px;top:643px" width="8" height="8" viewBox="0 0 8 8"><path d="M7.200 4L4.300 1H1.700Q1.200 1 1.200 1.500V6.500Q1.200 7 1.700 7H4.300Z" fill="#c85af0"/></svg>
<svg class="a" style="left:14px;top:670px" width="10" height="10" viewBox="0 0 10 10"><circle cx="5" cy="5" r="4" fill="none" stroke="#8a8a8a" stroke-width="1"/></svg><div class="t" style="top:666px;left:30px;color:#e8e8e8;letter-spacing:-0.82px">Shape Position</div>
<div class="a" style="left:177px;top:667px;width:94px;height:16px;background:#2a2a2a;border-radius:3px"></div><div class="t" style="top:666px;left:181px;color:#6a6a6a">X</div><div class="t" style="top:666px;left:194px;color:#e8e8e8">0.0</div><div class="a" style="left:277px;top:667px;width:94px;height:16px;background:#2a2a2a;border-radius:3px"></div><div class="t" style="top:666px;left:281px;color:#6a6a6a">Y</div><div class="t" style="top:666px;left:294px;color:#e8e8e8">0.0</div>
<svg class="a" style="left:14px;top:692px" width="10" height="10" viewBox="0 0 10 10"><circle cx="5" cy="5" r="4" fill="none" stroke="#8a8a8a" stroke-width="1"/></svg><div class="t" style="top:688px;left:30px;color:#e8e8e8;letter-spacing:-0.78px">Shape Rotation</div>
<div class="a" style="left:177px;top:689px;width:94px;height:16px;background:#2a2a2a;border-radius:3px"></div><div class="t" style="top:688px;left:181px;color:#6a6a6a">#</div><div class="t" style="top:688px;left:194px;color:#e8e8e8">0.0</div>
<svg class="a" style="left:14px;top:714px" width="10" height="10" viewBox="0 0 10 10"><circle cx="5" cy="5" r="4" fill="none" stroke="#8a8a8a" stroke-width="1"/></svg><div class="t" style="top:710px;left:30px;color:#e8e8e8;letter-spacing:-1.27px">Shape Scale</div>
<div class="a" style="left:177px;top:711px;width:94px;height:16px;background:#2a2a2a;border-radius:3px"></div><div class="t" style="top:710px;left:181px;color:#6a6a6a">X</div><div class="t" style="top:710px;left:194px;color:#e8e8e8">1.0</div><div class="a" style="left:277px;top:711px;width:94px;height:16px;background:#2a2a2a;border-radius:3px"></div><div class="t" style="top:710px;left:281px;color:#6a6a6a">Y</div><div class="t" style="top:710px;left:294px;color:#e8e8e8">1.0</div>
<div class="a" style="left:377px;top:711px;width:16px;height:16px;background:#2a2a2a;border-radius:3px;border:1px solid #555"></div><svg class="a" style="left:381px;top:713.5px" width="8" height="11" viewBox="0 0 8 11"><path d="M1.5 4V3A2.5 2.5 0 0 1 6.5 3V4M1.5 7V8A2.5 2.5 0 0 0 6.5 8V7" fill="none" stroke="#b0b0b0" stroke-width="1.1"/></svg>
<svg class="a" style="left:14px;top:736px" width="10" height="10" viewBox="0 0 10 10"><circle cx="5" cy="5" r="4" fill="none" stroke="#8a8a8a" stroke-width="1"/></svg><div class="t" style="top:732px;left:30px;color:#e8e8e8;letter-spacing:-1.29px">Shape Skew</div>
<div class="a" style="left:177px;top:733px;width:94px;height:16px;background:#2a2a2a;border-radius:3px"></div><div class="t" style="top:732px;left:181px;color:#6a6a6a">X</div><div class="t" style="top:732px;left:194px;color:#e8e8e8">0.0</div><div class="a" style="left:277px;top:733px;width:94px;height:16px;background:#2a2a2a;border-radius:3px"></div><div class="t" style="top:732px;left:281px;color:#6a6a6a">Y</div><div class="t" style="top:732px;left:294px;color:#e8e8e8">0.0</div>
<svg class="a" style="left:14px;top:758px" width="10" height="10" viewBox="0 0 10 10"><circle cx="5" cy="5" r="4" fill="none" stroke="#8a8a8a" stroke-width="1"/></svg><div class="t" style="top:754px;left:30px;color:#e8e8e8;letter-spacing:-0.53px">Shape Visibility</div>
<div class="a" style="left:177px;top:755px;width:16px;height:16px;background:#2a2a2a;border-radius:3px"></div><svg class="a" style="left:179px;top:757px" width="12" height="12" viewBox="0 0 12 12"><path d="M1.5 6.5L4.8 10L10.8 2" stroke="#2ecc71" stroke-width="2" fill="none"/></svg>
<svg class="a" style="left:14px;top:780px" width="10" height="10" viewBox="0 0 10 10"><circle cx="5" cy="5" r="4" fill="none" stroke="#8a8a8a" stroke-width="1"/></svg><div class="t" style="top:776px;left:30px;color:#e8e8e8;letter-spacing:-0.82px">Shape Opacity</div>
<div class="a" style="left:177px;top:783px;width:188px;height:4px;background:#e2e2e2;border-radius:2px"></div><svg class="a" style="left:360.5px;top:779.5px" width="11" height="11" viewBox="0 0 11 11"><circle cx="5.5" cy="5.5" r="5" fill="#6fcfb0"/><circle cx="5.5" cy="5.5" r="2" fill="#4aa88c"/></svg>
<div class="a" style="left:377px;top:777px;width:94px;height:16px;background:#2a2a2a;border-radius:3px"></div><div class="t" style="top:776px;left:381px;color:#6a6a6a;font-size:12px">%</div><div class="t" style="top:776px;left:394px;color:#e8e8e8;letter-spacing:-0.85px">100.0</div>
<svg class="a" style="left:14px;top:802px" width="10" height="10" viewBox="0 0 10 10"><circle cx="5" cy="5" r="4" fill="none" stroke="#8a8a8a" stroke-width="1"/></svg><div class="t" style="top:798px;left:30px;color:#e8e8e8;letter-spacing:-0.5px">Auto Id</div>
<div class="a" style="left:177px;top:799px;width:16px;height:16px;background:#2a2a2a;border-radius:3px"></div><svg class="a" style="left:179px;top:801px" width="12" height="12" viewBox="0 0 12 12"><path d="M1.5 6.5L4.8 10L10.8 2" stroke="#2ecc71" stroke-width="2" fill="none"/></svg>
<svg class="a" style="left:14px;top:824px" width="10" height="10" viewBox="0 0 10 10"><circle cx="5" cy="5" r="4" fill="none" stroke="#8a8a8a" stroke-width="1"/></svg><div class="t" style="top:820px;left:30px;color:#9a9a9a;letter-spacing:-1.1px">Shape Id</div>
<div class="a" style="left:177px;top:821px;width:94px;height:16px;background:#2a2a2a;border-radius:3px"></div><div class="t" style="top:820px;left:181px;color:#6a6a6a">#</div><div class="t" style="top:820px;left:194px;color:#9a9a9a">0</div>
<svg class="a" style="left:14px;top:846px" width="10" height="10" viewBox="0 0 10 10"><circle cx="5" cy="5" r="4" fill="none" stroke="#8a8a8a" stroke-width="1"/></svg><div class="t" style="top:842px;left:30px;color:#e8e8e8;letter-spacing:-0.71px">Shape Time Offset</div>
<div class="a" style="left:177px;top:843px;width:94px;height:16px;background:#2a2a2a;border-radius:3px"></div><div class="t" style="top:842px;left:181px;color:#6a6a6a">#</div><div class="t" style="top:842px;left:194px;color:#e8e8e8">0.0</div>
<div class="a" style="left:6px;top:866px;width:468px;height:23px;background:#373737;border-radius:4px 4px 0 0;border-top:1px solid #c6f06e;border-left:4px solid #c6f06e;border-right:4px solid #c6f06e"></div><svg class="a" style="left:15px;top:876px" width="8" height="5" viewBox="0 0 8 5"><path d="M0.5 0.8L4.0 4L7.5 0.8" fill="none" stroke="#b0b0b0" stroke-width="1.1"/></svg><div class="a" style="left:28px;top:869px;width:18px;height:18px;background:#2a2a2a;border-radius:3px"></div><svg class="a" style="left:31px;top:872px" width="12" height="12" viewBox="0 0 12 12"><path d="M10.5 4.5A5 5 0 1 1 8 1.6" fill="none" stroke="#e0e0e0" stroke-width="1.1"/><path d="M3.5 5.8L5.8 8.2L10.8 2" fill="none" stroke="#e0e0e0" stroke-width="1.3"/></svg><svg class="a" style="left:50px;top:873px" width="10" height="10" viewBox="0 0 10 10"><circle cx="5" cy="5" r="4.2" fill="none" stroke="#8a8a8a" stroke-width="1"/></svg><svg class="a" style="left:65px;top:870px" width="16" height="16" viewBox="0 0 16 16"><path d="M3.500 2V12.500H14" fill="none" stroke="#d8d8d8" stroke-width="1"/><path d="M3.500 12.500L9.500 6.500M6.800 6.300H9.700V9.200" fill="none" stroke="#d8d8d8" stroke-width="1"/><path d="M1.500 3.800L3.500 1.500L5.500 3.800" fill="none" stroke="#6fc07a" stroke-width="1"/><path d="M12.200 10.500L14.500 12.500L12.200 14.500" fill="none" stroke="#6fc07a" stroke-width="1"/></svg><div class="t" style="top:869px;left:87px;color:#e8e8e8;letter-spacing:-0.29px">3D Matrix [Duplicator]</div><div class="a" style="left:365.5px;top:869.5px;width:17px;height:17px;background:#2a2a2a;border-radius:4px;border:1px solid #4a4a4a"></div><svg class="a" style="left:367px;top:872px" width="14" height="12" viewBox="0 0 14 12"><rect x="0.5" y="1" width="4.5" height="3.5" fill="#e0e0e0"/><rect x="0.5" y="7.5" width="4.5" height="3.5" fill="#e0e0e0"/><path d="M5 2.7H8V9.2H5M8 6H13.5" stroke="#e0e0e0" stroke-width="1.2" fill="none"/><path d="M14 12V10L12 12Z" fill="#5cc8a4"/></svg><div class="a" style="left:386px;top:869.5px;width:21px;height:17px;background:#2c2c2c;border-radius:4px"></div><div class="a" style="left:396px;top:870px;width:1px;height:16px;background:#3c3c3c"></div><svg class="a" style="left:387px;top:874px" width="8" height="8" viewBox="0 0 8 8"><path d="M0.800 4L3.700 1H6.300Q6.800 1 6.800 1.500V6.500Q6.800 7 6.300 7H3.700Z" fill="#c8b060"/></svg><svg class="a" style="left:398px;top:874px" width="8" height="8" viewBox="0 0 8 8"><path d="M7.200 4L4.300 1H1.700Q1.200 1 1.200 1.500V6.500Q1.200 7 1.700 7H4.300Z" fill="#c455ea"/></svg><div class="a" style="left:410.5px;top:869.5px;width:17px;height:17px;background:#2a2a2a;border-radius:4px;border:1px solid #4a4a4a"></div><svg class="a" style="left:414px;top:871px" width="10" height="13" viewBox="0 0 10 13"><path d="M2.5 0.5H7.5V1.5L6.8 2.2V5.5L9 8V9H1V8L3.2 5.5V2.2L2.5 1.5Z" fill="#e0e0e0"/><path d="M5 9V12.5" stroke="#e0e0e0" stroke-width="1.2"/></svg><div class="a" style="left:430.5px;top:869.5px;width:17px;height:17px;background:#2a2a2a;border-radius:4px;border:1px solid #4a4a4a"></div><svg class="a" style="left:432px;top:871px" width="14" height="14" viewBox="0 0 14 14"><path d="M9 4.500Q9.400 8.100 13 8.500Q9.400 8.900 9 12.500Q8.600 8.900 5 8.500Q8.600 8.100 9 4.500Z" fill="#e0e0e0" stroke="#e0e0e0" stroke-width="0.5"/><circle cx="2.500" cy="2" r="1" fill="#e0e0e0"/><circle cx="8.500" cy="2" r="1" fill="#e0e0e0"/><circle cx="2.500" cy="8" r="1" fill="#e0e0e0"/><path d="M14 14V11.800L11.800 14Z" fill="#5cc8a4"/></svg><div class="a" style="left:450.5px;top:869.5px;width:17px;height:17px;background:#2a2a2a;border-radius:4px;border:1px solid #4a4a4a"></div><svg class="a" style="left:454px;top:873px" width="10" height="10" viewBox="0 0 10 10"><path d="M0.7 0.7L9.3 9.3M9.3 0.7L0.7 9.3" stroke="#e0e0e0" stroke-width="1.1" fill="none"/></svg>
<div class="a" style="left:6px;top:889px;width:468px;height:22px;background:#2b2b2b"></div>
<div class="a" style="left:243px;top:891px;width:115px;height:20px;background:#484848;border-radius:4px 4px 0 0"></div>
<div class="t" style="top:891px;left:100.29px;width:400px;text-align:center;color:#e8e8e8;letter-spacing:-0.58px">Behaviour</div>
<div class="t" style="top:891px;left:215.24px;width:400px;text-align:center;color:#c8c8c8;letter-spacing:-0.49px">Falloffs</div>
<div class="a" style="left:6px;top:911px;width:468px;height:113px;background:#3a3a3a;border-radius:4px 4px 0 0"></div>
<svg class="a" style="left:14px;top:917px" width="10" height="10" viewBox="0 0 10 10"><circle cx="5" cy="5" r="4" fill="none" stroke="#8a8a8a" stroke-width="1"/></svg><div class="t" style="top:913px;left:30px;color:#e8e8e8;letter-spacing:-0.5px">Strength</div>
<div class="a" style="left:177px;top:914px;width:94px;height:16px;background:#2a2a2a;border-radius:3px"></div><div class="t" style="top:913px;left:181px;color:#6a6a6a;font-size:12px">%</div><div class="t" style="top:913px;left:194px;color:#e8e8e8;letter-spacing:-0.85px">100.0</div>
<svg class="a" style="left:14px;top:939px" width="10" height="10" viewBox="0 0 10 10"><circle cx="5" cy="5" r="4" fill="none" stroke="#8a8a8a" stroke-width="1"/></svg><div class="t" style="top:935px;left:30px;color:#e8e8e8;letter-spacing:-0.54px">Position</div>
<div class="a" style="left:177px;top:936px;width:84px;height:16px;background:#2a2a2a;border-radius:3px"></div>
<div class="t" style="top:935px;left:181px;color:#6a6a6a">X</div>
<div class="t" style="top:935px;left:194px;color:#d8c476;letter-spacing:-0.51px">-360.213</div>
<svg class="a" style="left:250px;top:940px" width="8" height="8" viewBox="0 0 8 8"><path d="M0.800 4L3.700 1H6.300Q6.800 1 6.800 1.500V6.500Q6.800 7 6.300 7H3.700Z" fill="#d6ba5c"/></svg>
<div class="a" style="left:261px;top:936px;width:10px;height:16px;background:#3a3a3a;border-radius:0 3px 3px 0"></div>
<svg class="a" style="left:262px;top:941px" width="7" height="7" viewBox="0 0 7 7"><path d="M0.5 0.5H3L6.5 3.5L3 6.5H0.5Z" fill="#9a9a9a"/></svg>
<div class="a" style="left:277px;top:936px;width:94px;height:16px;background:#2a2a2a;border-radius:3px"></div><div class="t" style="top:935px;left:281px;color:#6a6a6a">Y</div><div class="t" style="top:935px;left:294px;color:#e8e8e8">0.0</div>
<svg class="a" style="left:14px;top:961px" width="10" height="10" viewBox="0 0 10 10"><circle cx="5" cy="5" r="4" fill="none" stroke="#8a8a8a" stroke-width="1"/></svg><div class="t" style="top:957px;left:30px;color:#e8e8e8;letter-spacing:-0.61px">Position Z</div>
<div class="a" style="left:177px;top:958px;width:84px;height:16px;background:#2a2a2a;border-radius:3px"></div>
<div class="t" style="top:957px;left:181px;color:#6a6a6a">Z</div>
<div class="t" style="top:957px;left:194px;color:#d8c476;letter-spacing:-0.67px">106.045</div>
<svg class="a" style="left:250px;top:962px" width="8" height="8" viewBox="0 0 8 8"><path d="M0.800 4L3.700 1H6.300Q6.800 1 6.800 1.500V6.500Q6.800 7 6.300 7H3.700Z" fill="#d6ba5c"/></svg>
<svg class="a" style="left:262px;top:963px" width="7" height="7" viewBox="0 0 7 7"><path d="M0.5 0.5H3L6.5 3.5L3 6.5H0.5Z" fill="#9a9a9a"/></svg>
<svg class="a" style="left:14px;top:983px" width="10" height="10" viewBox="0 0 10 10"><circle cx="5" cy="5" r="4" fill="none" stroke="#8a8a8a" stroke-width="1"/></svg><div class="t" style="top:979px;left:30px;color:#e8e8e8;letter-spacing:-0.43px">Rotation</div>
<div class="a" style="left:177px;top:980px;width:94px;height:16px;background:#2a2a2a;border-radius:3px"></div><div class="t" style="top:979px;left:181px;color:#6a6a6a">X</div><div class="t" style="top:979px;left:194px;color:#e8e8e8">0.0</div><div class="a" style="left:277px;top:980px;width:94px;height:16px;background:#2a2a2a;border-radius:3px"></div><div class="t" style="top:979px;left:281px;color:#6a6a6a">Y</div><div class="t" style="top:979px;left:294px;color:#e8e8e8">0.0</div>
<svg class="a" style="left:14px;top:1005px" width="10" height="10" viewBox="0 0 10 10"><circle cx="5" cy="5" r="4" fill="none" stroke="#8a8a8a" stroke-width="1"/></svg><div class="t" style="top:1001px;left:30px;color:#e8e8e8;letter-spacing:-0.56px">Rotation Z</div>
<div class="a" style="left:177px;top:1002px;width:94px;height:16px;background:#2a2a2a;border-radius:3px"></div><div class="t" style="top:1001px;left:181px;color:#6a6a6a">Z</div><div class="t" style="top:1001px;left:194px;color:#e8e8e8">0.0</div>
<div class="a" style="left:0px;top:1024px;width:494px;height:7px;background:#1b1b1b"></div>
<!-- s_view -->
<svg width="0" height="0" style="position:absolute"><defs><linearGradient id="ig" x1="0" y1="0" x2="0" y2="1"><stop offset="0" stop-color="#f4f4f4"/><stop offset="1" stop-color="#c4c4c4"/></linearGradient><linearGradient id="ig2" gradientUnits="userSpaceOnUse" x1="0" y1="4" x2="0" y2="20"><stop offset="0" stop-color="#f8f8f8"/><stop offset="1" stop-color="#c8c8c8"/></linearGradient></defs></svg>
<div class="a" style="left:494px;top:85px;width:30px;height:495px;background:#454545"></div>
<svg class="a" style="left:503px;top:89px" width="12" height="3" viewBox="0 0 12 3"><rect x="0" y="0" width="2" height="2" fill="#8a8a8a"/><rect x="5" y="0" width="2" height="2" fill="#8a8a8a"/><rect x="10" y="0" width="2" height="2" fill="#8a8a8a"/></svg>
<div class="a" style="left:495px;top:96px;width:28px;height:28px;background:#111;border-radius:5px"></div><svg class="a" style="left:497px;top:98px" width="24" height="24" viewBox="0 0 24 24"><path d="M7.3 2.2V18.3L11.5 14.9L13.6 20.2L16.3 19.1L14.2 14L19.4 13.3Z" fill="none" stroke="#2ecc71" stroke-width="1.3" stroke-linejoin="miter"/></svg><svg class="a" style="left:497px;top:128px" width="24" height="24" viewBox="0 0 24 24"><path d="M7 1.6V22.400L12.600 16.200L21.600 15.200Z" fill="url(#ig)"/></svg><svg class="a" style="left:497px;top:158px" width="24" height="24" viewBox="0 0 24 24"><path d="M4 5L13 7.5L17 14L13.5 17.5L7 13.5Z" fill="#e0e0e0"/><path d="M14.5 18.5L18 15L20 17L16.5 20.5Z" fill="#e0e0e0"/><path d="M4 5L10.5 11.5" stroke="#454545" stroke-width="1"/><circle cx="11" cy="12" r="1.3" fill="#454545"/></svg><svg class="a" style="left:497px;top:187px" width="24" height="24" viewBox="0 0 24 24"><path d="M4 20.5L5.2 16.8L7.8 19.4Z" fill="#e0e0e0"/><path d="M6 16L16.5 5.5L19 8L8.6 18.5Z" fill="#e0e0e0"/><path d="M17.3 4.7L18.3 3.7Q19 3 19.8 3.8L20.8 4.8Q21.4 5.5 20.8 6.2L19.8 7.2Z" fill="#e0e0e0"/></svg><svg class="a" style="left:497px;top:217px" width="24" height="24" viewBox="0 0 24 24"><rect x="2" y="7.500" width="13.500" height="11" rx="1.500" fill="url(#ig)"/><path d="M16 13L22 8V18Z" fill="url(#ig)"/><rect x="4" y="5" width="7" height="1.500" rx="0.700" fill="#e0e0e0"/><circle cx="5" cy="10.500" r="1.200" fill="#333"/></svg><svg class="a" style="left:497px;top:248px" width="24" height="24" viewBox="0 0 24 24"><path d="M4 20L20 4" stroke="#e0e0e0" stroke-width="1.2"/></svg><svg class="a" style="left:497px;top:278px" width="24" height="24" viewBox="0 0 24 24"><path d="M5 4.500H19V7.500H13.700V20H10.300V7.500H5Z" fill="url(#ig)"/></svg><svg class="a" style="left:497px;top:307px" width="24" height="24" viewBox="0 0 24 24"><path d="M3.800 4.100L11.900 11.600L7.100 12.200L4 15.900Z" fill="#e0e0e0"/><path d="M9 5.600L14.100 5.400M17.400 8.100L19.700 17.800M7.100 20.600H17" fill="none" stroke="#e0e0e0" stroke-width="1.100"/><rect x="15.900" y="3.900" width="2.300" height="2.300" fill="#f4f4f4"/><rect x="2.900" y="19.700" width="2.300" height="2.300" fill="#f4f4f4"/><rect x="18.900" y="19.700" width="2.300" height="2.300" fill="#f4f4f4"/><rect x="3.800" y="17.800" width="1.200" height="1.200" fill="#f4f4f4"/></svg><svg class="a" style="left:497px;top:338px" width="24" height="24" viewBox="0 0 24 24"><rect x="5" y="5" width="14" height="14" fill="url(#ig)"/></svg><svg class="a" style="left:497px;top:368px" width="24" height="24" viewBox="0 0 24 24"><circle cx="12" cy="12" r="8" fill="url(#ig)"/></svg><svg class="a" style="left:497px;top:397px" width="24" height="24" viewBox="0 0 24 24"><path d="M12 3.5L20.5 10L17.3 20H6.7L3.500 10Z" fill="url(#ig)"/></svg><svg class="a" style="left:497px;top:427px" width="24" height="24" viewBox="0 0 24 24"><path d="M12 2.5L14.4 9.3L21.5 9.5L15.9 13.9L17.9 20.7L12 16.7L6.1 20.7L8.1 13.9L2.5 9.500L9.6 9.3Z" fill="url(#ig)"/></svg><svg class="a" style="left:497px;top:458px" width="24" height="24" viewBox="0 0 24 24"><path d="M11.900 18.400A6.400 6.400 0 1 1 18.300 12" fill="none" stroke="url(#ig2)" stroke-width="3.700"/></svg><svg class="a" style="left:497px;top:488px" width="24" height="24" viewBox="0 0 24 24"><path d="M12 3Q13 11 21 12Q13 13 12 21Q11 13 3 12Q11 11 12 3Z" fill="url(#ig)"/></svg><svg class="a" style="left:497px;top:518px" width="24" height="24" viewBox="0 0 24 24"><polygon points="20.48,10.55 20.48,13.45 18.04,13.80 17.54,14.99 19.02,16.96 16.96,19.02 14.99,17.54 13.80,18.04 13.45,20.48 10.55,20.48 10.20,18.04 9.01,17.54 7.04,19.02 4.98,16.96 6.46,14.99 5.96,13.80 3.52,13.45 3.52,10.55 5.96,10.20 6.46,9.01 4.98,7.04 7.04,4.98 9.01,6.46 10.20,5.96 10.55,3.52 13.45,3.52 13.80,5.96 14.99,6.46 16.96,4.98 19.02,7.04 17.54,9.01 18.04,10.20" fill="#e0e0e0"/><circle cx="12" cy="12" r="2.8" fill="#454545"/></svg><svg class="a" style="left:497px;top:559px" width="24" height="24" viewBox="0 0 24 24"><path d="M5 7L10 12L5 17M12 7L17 12L12 17" fill="none" stroke="#b0b0b0" stroke-width="1.2"/></svg>
<div class="a" style="left:530px;top:85px;width:1057px;height:22px;background:#1e1e1e"></div>
<div class="a" style="left:530px;top:85px;width:87px;height:22px;background:#454545;border-radius:4px 4px 0 0"></div>
<div class="t" style="top:87px;left:535.3px;color:#e8e8e8;letter-spacing:-0.59px">Composition 3</div>
<div class="a" style="left:530px;top:107px;width:1057px;height:451px;background:#000"></div>
<svg class="a" style="left:530px;top:107px" width="1058" height="451" viewBox="0 0 1058 451"><rect x="164" y="20" width="729" height="410" fill="#00aeff"/><circle cx="626.6" cy="165.6" r="44.6" fill="#fd4fbf"/><circle cx="622.6" cy="166.6" r="46.5" fill="#8c52ff"/><circle cx="615.1" cy="170.4" r="46.2" fill="#fd4fbf"/><circle cx="431.6" cy="284.6" r="39.8" fill="#8c52ff"/><circle cx="445.8" cy="276.2" r="43.8" fill="#4da3ff"/><circle cx="499.5" cy="244.0" r="27.3" fill="#ff5263"/><circle cx="458.1" cy="268.6" r="47" fill="#52ffb4"/><circle cx="538.7" cy="218.0" r="50.7" fill="#ff5263"/><text x="458.6" y="269.2" transform="rotate(-32 458.6 269.2)" font-family="Liberation Sans, sans-serif" font-size="26" fill="#fff" stroke="#fff" stroke-width="0.7" text-anchor="middle" dominant-baseline="central" letter-spacing="-0.5">4</text><text x="538.5" y="219.2" transform="rotate(-32 538.5 219.2)" font-family="Liberation Sans, sans-serif" font-size="28" fill="#fff" stroke="#fff" stroke-width="0.7" text-anchor="middle" dominant-baseline="central" letter-spacing="-0.5">8</text><text x="618.0" y="169.3" transform="rotate(-32 618.0 169.3)" font-family="Liberation Sans, sans-serif" font-size="27" fill="#fff" stroke="#fff" stroke-width="0.7" text-anchor="middle" dominant-baseline="central" letter-spacing="-0.5">12</text><polygon points="638.6,95.9 692.5,182.3 424.3,349.6 370.4,263.4" fill="none" stroke="#3ccf80" stroke-width="1.15"/><rect x="635.6" y="92.9" width="6" height="6" fill="#fff" stroke="#3ccf80" stroke-width="0.8" transform="rotate(-32 638.6 95.9)"/><rect x="689.5" y="179.3" width="6" height="6" fill="#fff" stroke="#3ccf80" stroke-width="0.8" transform="rotate(-32 692.5 182.3)"/><rect x="421.3" y="346.6" width="6" height="6" fill="#fff" stroke="#3ccf80" stroke-width="0.8" transform="rotate(-32 424.3 349.6)"/><rect x="367.4" y="260.4" width="6" height="6" fill="#fff" stroke="#3ccf80" stroke-width="0.8" transform="rotate(-32 370.4 263.4)"/><circle cx="527.8" cy="225.2" r="4" fill="none" stroke="#5a2a30" stroke-width="0.9"/><circle cx="527.8" cy="225.2" r="1.1" fill="#3a2024"/><rect x="371" y="247" width="9" height="9" fill="#ffe680"/><text x="383" y="256.5" font-family="Liberation Sans, sans-serif" font-size="12" fill="#0a0a0a" stroke="#0a0a0a" stroke-width="0.25" letter-spacing="0">Duplicator</text></svg>
<div class="t" style="top:458px;left:569.9px;color:#f2f2f2;letter-spacing:-1.14px">Hold S</div><div class="t" style="top:472px;left:569.9px;color:#f2f2f2;letter-spacing:-1.3px">Space</div><div class="t" style="top:486px;left:569.9px;color:#f2f2f2;letter-spacing:-0.88px">Space + click + drag</div><div class="t" style="top:500px;left:569.9px;color:#f2f2f2;letter-spacing:-0.63px">Alt + click + drag</div><div class="t" style="top:514px;left:569.9px;color:#f2f2f2;letter-spacing:-0.5px">Shift</div><div class="a" style="left:530px;top:461px;width:400px;height:70px;color:transparent;background:linear-gradient(to right,#444 164px,#5a6db6 164px);-webkit-background-clip:text;background-clip:text"><div style="height:14px;line-height:14px;white-space:nowrap;padding-left:75.8px;letter-spacing:-0.57px">Direct Layer Selection</div><div style="height:14px;line-height:14px;white-space:nowrap;padding-left:73.2px;letter-spacing:-0.74px">Play/ Stop</div><div style="height:14px;line-height:14px;white-space:nowrap;padding-left:144.3px;letter-spacing:-1.55px">Pan</div><div style="height:14px;line-height:14px;white-space:nowrap;padding-left:128.4px;letter-spacing:-0.48px">Move Pivot Point</div><div style="height:14px;line-height:14px;white-space:nowrap;padding-left:67px;letter-spacing:-0.97px">Enable Snapping</div></div>
<div class="t" style="top:534px;left:858.18px;width:400px;text-align:center;color:#f0f0f0;letter-spacing:-0.36px">Viewport Quality: High</div>
<div class="a" style="left:530px;top:558px;width:1057px;height:22px;background:#454545"></div>
<div class="a" style="left:535px;top:561px;width:78px;height:16px;background:#2a2a2a;border-radius:3px"></div>
<div class="t" style="top:560px;left:538px;color:#e8e8e8;letter-spacing:-0.3px">38<span style="font-size:11.5px;letter-spacing:-1px">%</span></div>
<svg class="a" style="left:600px;top:567px" width="9" height="6" viewBox="0 0 9 6"><path d="M0.5 0.8L4.5 5L8.5 0.8" fill="none" stroke="#d0d0d0" stroke-width="1.1"/></svg>
<div class="a" style="left:866px;top:559px;width:100px;height:20px;background:#2c2c2c;border-radius:4px;border:1px solid #383838"></div><div class="a" style="left:886px;top:560px;width:1px;height:18px;background:#3c3c3c"></div><div class="a" style="left:906px;top:560px;width:1px;height:18px;background:#3c3c3c"></div><div class="a" style="left:926px;top:560px;width:1px;height:18px;background:#3c3c3c"></div><div class="a" style="left:946px;top:560px;width:1px;height:18px;background:#3c3c3c"></div><svg class="a" style="left:869px;top:563px" width="14" height="12" viewBox="0 0 14 12"><path d="M1.5 0.5V11.5" stroke="#e8e8e8" stroke-width="1.6"/><path d="M12.5 0.5V11.5L4 6Z" fill="#e8e8e8"/></svg><svg class="a" style="left:889px;top:563px" width="14" height="12" viewBox="0 0 14 12"><path d="M8.500 0.5V11.5L1 6Z" fill="#e8e8e8"/><path d="M11.500 0.5V11.5" stroke="#e8e8e8" stroke-width="1.6"/></svg><svg class="a" style="left:910px;top:563px" width="12" height="12" viewBox="0 0 12 12"><path d="M1.5 0.5V11.5L10.5 6Z" fill="#e8e8e8"/></svg><svg class="a" style="left:929px;top:563px" width="14" height="12" viewBox="0 0 14 12"><path d="M2.500 0.5V11.5" stroke="#e8e8e8" stroke-width="1.6"/><path d="M5.500 0.5V11.5L13 6Z" fill="#e8e8e8"/></svg><svg class="a" style="left:949px;top:563px" width="14" height="12" viewBox="0 0 14 12"><path d="M1.5 0.5V11.5L10 6Z" fill="#e8e8e8"/><path d="M12.500 0.5V11.5" stroke="#e8e8e8" stroke-width="1.6"/></svg><div class="a" style="left:971px;top:559px;width:20px;height:20px;background:#2c2c2c;border-radius:4px;border:1px solid #383838"></div><svg class="a" style="left:974px;top:563px" width="14" height="12" viewBox="0 0 14 12"><path d="M1.5 6V4Q1.5 3 2.5 3H9.5M12.5 6V10Q12.5 11 11.5 11H2.500Q1.5 11 1.5 10V6" fill="none" stroke="#e8e8e8" stroke-width="1.3"/><path d="M9 0.2L12.5 3L9 5.800Z" fill="#e8e8e8"/></svg>
<div class="a" style="left:1232px;top:560px;width:37px;height:18px;background:#2a2a2a;border-radius:3px"></div><svg class="a" style="left:1234px;top:564.5px" width="14" height="9" viewBox="0 0 14 9"><path d="M0.3 4.5L3.5 0.5H12.5Q13.7 0.5 13.7 1.7V7.3Q13.7 8.5 12.5 8.5H3.5Z" fill="#e0e0e0"/><circle cx="4.300" cy="4.5" r="1.400" fill="#333"/></svg><div class="t" style="top:560px;left:1258px;color:#8a8a8a">0</div><div class="a" style="left:1272px;top:559px;width:31px;height:20px;background:#3c3c3c;border-radius:4px;border:1px solid #333"></div><div class="a" style="left:1272px;top:559px;width:19px;height:20px;background:#2c2c2c;border-radius:4px 0 0 4px;border:1px solid #333"></div><svg class="a" style="left:1275px;top:561.5px" width="15" height="15" viewBox="0 0 15 15"><path d="M1 5.500H3.500L7.500 2V13L3.500 9.500H1Z" fill="#2ecc71"/><path d="M9.500 4.500Q11.500 7.500 9.500 10.500M11.500 2.500Q15 7.500 11.500 12.500" fill="none" stroke="#2ecc71" stroke-width="1.2"/></svg><svg class="a" style="left:1294px;top:565px" width="6" height="8" viewBox="0 0 6 8"><path d="M0.8 0.8L5.2 4L0.8 7.2Z" fill="none" stroke="#a0a0a0" stroke-width="0.9"/></svg><div class="a" style="left:1307px;top:559px;width:31px;height:20px;background:#3c3c3c;border-radius:4px;border:1px solid #333"></div><div class="a" style="left:1307px;top:559px;width:19px;height:20px;background:#2c2c2c;border-radius:4px 0 0 4px;border:1px solid #333"></div><svg class="a" style="left:1310px;top:561.5px" width="15" height="15" viewBox="0 0 15 15"><g transform="rotate(45 7.5 7.5)"><path d="M3 13V6.500A4.500 4.500 0 0 1 12 6.500V13H9V6.500A1.500 1.500 0 0 0 6 6.500V13Z" fill="#e0e0e0"/><path d="M3 10.500H6M9 10.500H12" stroke="#2c2c2c" stroke-width="1"/></g></svg><svg class="a" style="left:1329px;top:565px" width="6" height="8" viewBox="0 0 6 8"><path d="M0.8 0.8L5.2 4L0.8 7.2Z" fill="none" stroke="#a0a0a0" stroke-width="0.9"/></svg><div class="a" style="left:1342px;top:559px;width:31px;height:20px;background:#3c3c3c;border-radius:4px;border:1px solid #333"></div><div class="a" style="left:1342px;top:559px;width:19px;height:20px;background:#2c2c2c;border-radius:4px 0 0 4px;border:1px solid #333"></div><svg class="a" style="left:1344.5px;top:561.5px" width="15" height="15" viewBox="0 0 15 15"><path d="M4.500 0.5V14.500M10.500 0.5V14.500M0.5 4.500H14.500M0.5 10.500H14.500" stroke="#e0e0e0" stroke-width="1.1" fill="none"/></svg><svg class="a" style="left:1364px;top:565px" width="6" height="8" viewBox="0 0 6 8"><path d="M0.8 0.8L5.2 4L0.8 7.2Z" fill="none" stroke="#a0a0a0" stroke-width="0.9"/></svg><div class="a" style="left:1377px;top:559px;width:20px;height:20px;background:#3c3c3c;border-radius:4px;border:1px solid #333"></div><div class="a" style="left:1377px;top:559px;width:20px;height:20px;background:#2c2c2c;border-radius:4px;border:1px solid #333"></div><svg class="a" style="left:1379.5px;top:562.5px" width="16" height="13" viewBox="0 0 16 13"><rect x="0.5" y="0.5" width="3.500" height="12" fill="#2ecc71"/><rect x="6.500" y="1" width="8.500" height="4.500" fill="none" stroke="#2ecc71" stroke-width="1"/><rect x="6" y="8" width="9.500" height="4.500" fill="#2ecc71"/></svg><div class="a" style="left:1400px;top:559px;width:20px;height:20px;background:#3c3c3c;border-radius:4px;border:1px solid #333"></div><div class="a" style="left:1400px;top:559px;width:20px;height:20px;background:#2c2c2c;border-radius:4px;border:1px solid #333"></div><svg class="a" style="left:1402.5px;top:563.5px" width="15" height="11" viewBox="0 0 15 11"><path d="M0.5 0.5H2.500L6 5.500L2.500 10.500H0.5L4 5.500ZM5 0.5H7L10.500 5.500L7 10.500H5L8.500 5.500ZM9.500 0.5H11.500L15 5.500L11.500 10.500H9.500L13 5.500Z" fill="#e0e0e0"/></svg><div class="a" style="left:1423px;top:559px;width:31px;height:20px;background:#3c3c3c;border-radius:4px;border:1px solid #333"></div><div class="a" style="left:1423px;top:559px;width:19px;height:20px;background:#2c2c2c;border-radius:4px 0 0 4px;border:1px solid #333"></div><svg class="a" style="left:1425.5px;top:562.5px" width="15" height="13" viewBox="0 0 15 13"><rect x="0.6" y="0.6" width="13.800" height="9.500" fill="#4a4a4a" stroke="#e0e0e0" stroke-width="1.2"/><rect x="0" y="10.800" width="15" height="2" fill="#e0e0e0"/></svg><svg class="a" style="left:1445px;top:565px" width="6" height="8" viewBox="0 0 6 8"><path d="M0.8 0.8L5.2 4L0.8 7.2Z" fill="none" stroke="#a0a0a0" stroke-width="0.9"/></svg><div class="a" style="left:1458px;top:559px;width:31px;height:20px;background:#3c3c3c;border-radius:4px;border:1px solid #333"></div><div class="a" style="left:1458px;top:559px;width:19px;height:20px;background:#2c2c2c;border-radius:4px 0 0 4px;border:1px solid #333"></div><svg class="a" style="left:1460.5px;top:562.5px" width="15" height="13" viewBox="0 0 15 13"><rect x="0.5" y="0.5" width="8" height="6" fill="none" stroke="#b8b8b8" stroke-width="1"/><path d="M11 3.500V9H3.500M13.500 6V11.500H6" fill="none" stroke="#b8b8b8" stroke-width="1"/></svg><svg class="a" style="left:1480px;top:565px" width="6" height="8" viewBox="0 0 6 8"><path d="M0.8 0.8L5.2 4L0.8 7.2Z" fill="none" stroke="#a0a0a0" stroke-width="0.9"/></svg><div class="a" style="left:1493px;top:559px;width:31px;height:20px;background:#3c3c3c;border-radius:4px;border:1px solid #333"></div><div class="a" style="left:1493px;top:559px;width:19px;height:20px;background:#2c2c2c;border-radius:4px 0 0 4px;border:1px solid #333"></div><svg class="a" style="left:1495.5px;top:561.5px" width="15" height="15" viewBox="0 0 15 15"><rect x="0.5" y="0.5" width="9" height="9" fill="#c8c8c8"/><rect x="5.500" y="5.500" width="9" height="9" fill="#2c2c2c" stroke="#e0e0e0" stroke-width="1"/></svg><svg class="a" style="left:1515px;top:565px" width="6" height="8" viewBox="0 0 6 8"><path d="M0.8 0.8L5.2 4L0.8 7.2Z" fill="none" stroke="#a0a0a0" stroke-width="0.9"/></svg><div class="a" style="left:1528px;top:559px;width:31px;height:20px;background:#3c3c3c;border-radius:4px;border:1px solid #333"></div><div class="a" style="left:1528px;top:559px;width:19px;height:20px;background:#2c2c2c;border-radius:4px 0 0 4px;border:1px solid #333"></div><svg class="a" style="left:1531.5px;top:563px" width="12" height="12" viewBox="0 0 12 12"><rect x="0" y="0" width="3" height="3" fill="#2ecc71"/><rect x="0" y="6" width="3" height="3" fill="#2ecc71"/><rect x="3" y="3" width="3" height="3" fill="#2ecc71"/><rect x="3" y="9" width="3" height="3" fill="#2ecc71"/><rect x="6" y="0" width="3" height="3" fill="#2ecc71"/><rect x="6" y="6" width="3" height="3" fill="#2ecc71"/><rect x="9" y="3" width="3" height="3" fill="#2ecc71"/><rect x="9" y="9" width="3" height="3" fill="#2ecc71"/></svg><svg class="a" style="left:1550px;top:565px" width="6" height="8" viewBox="0 0 6 8"><path d="M0.8 0.8L5.2 4L0.8 7.2Z" fill="none" stroke="#a0a0a0" stroke-width="0.9"/></svg><div class="a" style="left:1563px;top:559px;width:20px;height:20px;background:#3c3c3c;border-radius:4px;border:1px solid #333"></div><div class="a" style="left:1563px;top:559px;width:20px;height:20px;background:#2c2c2c;border-radius:4px;border:1px solid #333"></div><svg class="a" style="left:1566px;top:562px" width="14" height="14" viewBox="0 0 14 14"><polygon points="13.70,5.85 13.70,8.15 11.79,8.43 11.40,9.38 12.55,10.93 10.93,12.55 9.38,11.40 8.43,11.79 8.15,13.70 5.85,13.70 5.57,11.79 4.62,11.40 3.07,12.55 1.45,10.93 2.60,9.38 2.21,8.43 0.30,8.15 0.30,5.85 2.21,5.57 2.60,4.62 1.45,3.07 3.07,1.45 4.62,2.60 5.57,2.21 5.85,0.30 8.15,0.30 8.43,2.21 9.38,2.60 10.93,1.45 12.55,3.07 11.40,4.62 11.79,5.57" fill="#e0e0e0"/><circle cx="7" cy="7" r="2.2" fill="#2c2c2c"/></svg>
<!-- s_right -->
<div class="a" style="left:1593px;top:85px;width:321px;height:22px;background:#1e1e1e"></div>
<div class="a" style="left:1593px;top:85px;width:40px;height:23px;background:#454545;border-radius:4px 4px 0 0"></div>
<div class="t" style="top:87px;left:1598px;color:#e8e8e8;letter-spacing:-0.53px">Color</div>
<div class="a" style="left:1634px;top:85px;width:69px;height:22px;background:#2a2a2a;border-radius:4px 4px 0 0"></div>
<div class="t" style="top:87px;left:1639px;color:#e8e8e8;letter-spacing:-0.92px">Add Layers</div>
<div class="a" style="left:1593px;top:107px;width:321px;height:377px;background:#454545"></div>
<div class="a" style="left:1593px;top:107px;width:309px;height:160px;overflow:hidden"><div style="position:absolute;left:53px;top:-47.6px;width:200px;height:200px;border-radius:50%;background:conic-gradient(from 90deg,#f00,#f0f,#00f,#0ff,#0f0,#ff0,#f00)"></div><div style="position:absolute;left:78px;top:-22.6px;width:150px;height:150px;border-radius:50%;background:#454545"></div><div style="position:absolute;left:109px;top:9px;width:90px;height:90px;background:linear-gradient(to right,#000,rgba(0,0,0,0)),linear-gradient(to bottom,#fff,#ff00a6)"></div></div>
<svg class="a" style="left:1785px;top:171px" width="14" height="14" viewBox="0 0 14 14"><circle cx="7" cy="7" r="5.8" fill="none" stroke="#f0f0f0" stroke-width="1"/></svg>
<svg class="a" style="left:1807px;top:208px" width="14" height="14" viewBox="0 0 14 14"><circle cx="7" cy="7" r="5.8" fill="none" stroke="#f0f0f0" stroke-width="1"/></svg>
<div class="a" style="left:1902px;top:107px;width:12px;height:377px;background:#3a3a3a"></div>
<div class="a" style="left:1903px;top:153px;width:9px;height:303px;background:#555;border-radius:5px"></div>
<div class="a" style="left:1600px;top:273px;width:22px;height:22px;background:#fd4fbf;border-radius:3px"></div>
<div class="t" style="top:275px;left:1625px;color:#e8e8e8;letter-spacing:-0.61px">Hot Pink</div>
<div class="a" style="left:1871px;top:273px;width:22px;height:22px;background:#2a2a2a;border-radius:3px;border:1px solid #555"></div>
<svg class="a" style="left:1876px;top:278px" width="12" height="12" viewBox="0 0 12 12"><path d="M0.8 11.200L1.300 9L6.800 3.500L8.500 5.200L3 10.700Z" fill="#d0d0d0" opacity="0.85"/><path d="M6.200 2.600L9.400 5.800" stroke="#d0d0d0" stroke-width="1.700"/><path d="M7.600 4.400L9.600 2Q10.500 1.100 11.200 1.800Q11.900 2.500 11 3.400Z" fill="#d0d0d0" stroke="#d0d0d0" stroke-width="1.200"/></svg>
<div class="a" style="left:1600px;top:300px;width:50px;height:18px;background:#505050;border-radius:3px;border:1px solid #606060"></div>
<div class="t" style="top:300px;left:1603px;color:#e8e8e8;letter-spacing:-1.1px">Hex</div>
<svg class="a" style="left:1637px;top:307px" width="9" height="6" viewBox="0 0 9 6"><path d="M0.5 0.8L4.5 5L8.5 0.8" fill="none" stroke="#d0d0d0" stroke-width="1.1"/></svg>
<div class="a" style="left:1653px;top:298px;width:240px;height:22px;background:#2a2a2a;border-radius:3px"></div>
<div class="t" style="top:300px;left:1658px;color:#5a5a5a">#</div>
<div class="t" style="top:300px;left:1670px;color:#e8e8e8;letter-spacing:-0.12px">fd4fbf</div>
<div class="a" style="left:1600px;top:329.7px;width:233px;height:4px;background:#e2e2e2;border-radius:2px"></div>
<svg class="a" style="left:1828.5px;top:326px" width="11" height="11" viewBox="0 0 11 11"><circle cx="5.5" cy="5.5" r="5" fill="#6fcfb0"/><circle cx="5.5" cy="5.5" r="2" fill="#4aa88c"/></svg>
<div class="a" style="left:1849px;top:324px;width:44px;height:16px;background:#2a2a2a;border-radius:3px"></div>
<div class="t" style="top:323px;left:1853px;color:#5a5a5a">A</div>
<div class="t" style="top:323px;left:1866px;color:#e8e8e8;letter-spacing:-0.75px">255</div>
<div class="a" style="left:1597px;top:347px;width:298px;height:21px;background:#262626;border-radius:3px"></div>
<div class="a" style="left:1598px;top:348px;width:149px;height:20px;background:#454545;border-radius:4px 4px 0 0;border:1px solid #333;border-bottom:none"></div>
<div class="t" style="top:348px;left:1472.48px;width:400px;text-align:center;color:#e8e8e8;letter-spacing:-0.96px">Swatches</div>
<div class="t" style="top:348px;left:1620.27px;width:400px;text-align:center;color:#c8c8c8;letter-spacing:-0.54px">Generator</div>
<div class="a" style="left:1598px;top:371px;width:257px;height:18px;background:#585858;border-radius:4px"></div>
<div class="a" style="left:1599px;top:372px;width:62px;height:16px;background:#1e1e1e;border-radius:4px"></div>
<svg class="a" style="left:1605px;top:374px" width="12" height="11" viewBox="0 0 12 11"><path d="M1.5 0.5V10.5M4.500 0.5V10.5M7.500 0.5L10.500 10.5" stroke="#2ecc71" stroke-width="1.6" fill="none"/></svg>
<div class="t" style="top:371px;left:1621px;color:#e8e8e8;letter-spacing:-0.45px">Library</div>
<svg class="a" style="left:1670px;top:374px" width="11" height="11" viewBox="0 0 11 11"><path d="M0.5 2.500V10H10.500V2.500H5L4 0.5H1.5Q0.5 0.5 0.5 1.5Z" fill="#d8d8d8"/><path d="M2.500 5H3.500M5 5H9M2.500 7.500H3.500M5 7.500H9" stroke="#585858" stroke-width="1"/></svg>
<div class="t" style="top:371px;left:1686px;color:#e8e8e8;letter-spacing:-0.53px">Project</div>
<svg class="a" style="left:1738px;top:374px" width="9" height="11" viewBox="0 0 9 11"><path d="M0.5 0.5H5.500L8.500 3.500V10.500H0.5Z" fill="none" stroke="#d8d8d8" stroke-width="1"/><path d="M5.500 0.5V3.500H8.500" fill="none" stroke="#d8d8d8" stroke-width="1"/></svg>
<div class="t" style="top:371px;left:1752px;color:#e8e8e8;letter-spacing:-1.3px">Scene</div>
<svg class="a" style="left:1800px;top:374px" width="11" height="11" viewBox="0 0 11 11"><path d="M3 0.5H8Q10.500 0.5 10.500 3V5.500L6 10.500H3Q0.5 10.500 0.5 8V3Q0.5 0.5 3 0.5Z" fill="none" stroke="#d8d8d8" stroke-width="1"/><path d="M10.500 5.500H8Q6 5.500 6 7.500V10.500" fill="none" stroke="#d8d8d8" stroke-width="1"/></svg>
<div class="t" style="top:371px;left:1816px;color:#e8e8e8;letter-spacing:-1.06px">Labels</div>
<div class="a" style="left:1858px;top:371px;width:37px;height:18px;background:#585858;border-radius:4px"></div>
<div class="a" style="left:1859px;top:372px;width:18px;height:16px;background:#1e1e1e;border-radius:4px"></div>
<svg class="a" style="left:1863px;top:375px" width="10" height="10" viewBox="0 0 10 10"><rect x="0" y="0" width="4" height="4" rx="1" fill="#2ecc71"/><rect x="6" y="0" width="4" height="4" rx="1" fill="#2ecc71"/><rect x="0" y="6" width="4" height="4" rx="1" fill="#2ecc71"/><rect x="6" y="6" width="4" height="4" rx="1" fill="#2ecc71"/></svg>
<svg class="a" style="left:1881px;top:376px" width="10" height="9" viewBox="0 0 10 9"><path d="M0 1H10M0 4.500H10M0 8H10" stroke="#d8d8d8" stroke-width="1.1"/></svg>
<div class="a" style="left:1598px;top:393px;width:275px;height:17px;background:#505050;border-radius:3px;border:1px solid #5c5c5c"></div>
<div class="t" style="top:392px;left:1601px;color:#e8e8e8;letter-spacing:-1.3px">new</div>
<svg class="a" style="left:1860px;top:398.5px" width="9" height="6" viewBox="0 0 9 6"><path d="M0.5 0.8L4.5 5L8.5 0.8" fill="none" stroke="#d0d0d0" stroke-width="1.1"/></svg>
<svg class="a" style="left:1880px;top:400px" width="13" height="3" viewBox="0 0 13 3"><rect x="0" y="0" width="2.500" height="2.500" fill="#d8d8d8"/><rect x="5" y="0" width="2.500" height="2.500" fill="#d8d8d8"/><rect x="10" y="0" width="2.500" height="2.500" fill="#d8d8d8"/></svg>
<div class="a" style="left:1598px;top:410px;width:297px;height:74px;background:#262626"></div>
<div class="a" style="left:1600px;top:412px;width:18px;height:18px;background:#8c52ff;border-radius:3px"></div>
<div class="a" style="left:1622px;top:412px;width:18px;height:18px;background:#4da3ff;border-radius:3px"></div>
<div class="a" style="left:1644px;top:412px;width:18px;height:18px;background:#ff7752;border-radius:3px"></div>
<div class="a" style="left:1666px;top:412px;width:18px;height:18px;background:#52ffb4;border-radius:3px"></div>
<div class="a" style="left:1688px;top:412px;width:18px;height:18px;background:#ff5263;border-radius:3px"></div>
<div class="a" style="left:1710px;top:412px;width:18px;height:18px;background:#fd4fbf;border-radius:3px"></div>
<div class="a" style="left:1593px;top:490px;width:321px;height:22px;background:#1e1e1e"></div>
<div class="a" style="left:1593px;top:490px;width:38px;height:22px;background:#454545;border-radius:4px 4px 0 0"></div>
<div class="t" style="top:492px;left:1598px;color:#e8e8e8;letter-spacing:-0.47px">Align</div>
<div class="a" style="left:1593px;top:512px;width:321px;height:68px;background:#454545"></div>
<div class="t" style="top:522px;left:1601.4px;color:#e8e8e8;letter-spacing:-0.54px">Alignment</div>
<div class="t" style="top:550px;left:1601.4px;color:#e8e8e8;letter-spacing:-0.16px">Distribution</div>
<div class="a" style="left:1790px;top:523px;width:18px;height:17px;background:#262626;border-radius:3px;border:1px solid #5a5a5a"></div><svg class="a" style="left:1793px;top:526px" width="12" height="11" viewBox="0 0 12 11"><path d="M1 0V11" stroke="#e8e8e8" stroke-width="1.3"/><path d="M3 3H9M3 8H11" stroke="#e8e8e8" stroke-width="1.8"/></svg>
<div class="a" style="left:1808px;top:523px;width:18px;height:17px;background:#262626;border-radius:3px;border:1px solid #5a5a5a"></div><svg class="a" style="left:1811px;top:526px" width="12" height="11" viewBox="0 0 12 11"><path d="M6 0V11" stroke="#e8e8e8" stroke-width="1.3"/><path d="M2 3H10M0.5 8H11.500" stroke="#e8e8e8" stroke-width="1.8"/></svg>
<div class="a" style="left:1826px;top:523px;width:18px;height:17px;background:#262626;border-radius:3px;border:1px solid #5a5a5a"></div><svg class="a" style="left:1829px;top:526px" width="12" height="11" viewBox="0 0 12 11"><path d="M11 0V11" stroke="#e8e8e8" stroke-width="1.3"/><path d="M3 3H9M1 8H9" stroke="#e8e8e8" stroke-width="1.8"/></svg>
<div class="a" style="left:1852px;top:523px;width:18px;height:17px;background:#262626;border-radius:3px;border:1px solid #5a5a5a"></div><svg class="a" style="left:1855px;top:526px" width="12" height="11" viewBox="0 0 12 11"><path d="M0 1H12" stroke="#e8e8e8" stroke-width="1.3"/><path d="M4 3V11M9 3V8" stroke="#e8e8e8" stroke-width="1.8"/></svg>
<div class="a" style="left:1870px;top:523px;width:18px;height:17px;background:#262626;border-radius:3px;border:1px solid #5a5a5a"></div><svg class="a" style="left:1873px;top:526px" width="12" height="11" viewBox="0 0 12 11"><path d="M0 5.500H12" stroke="#e8e8e8" stroke-width="1.3"/><path d="M4 0.5V10.500M9 2V9" stroke="#e8e8e8" stroke-width="1.8"/></svg>
<div class="a" style="left:1888px;top:523px;width:18px;height:17px;background:#262626;border-radius:3px;border:1px solid #5a5a5a"></div><svg class="a" style="left:1891px;top:526px" width="12" height="11" viewBox="0 0 12 11"><path d="M0 10.500H12" stroke="#e8e8e8" stroke-width="1.3"/><path d="M4 3V9M9 0.5V9" stroke="#e8e8e8" stroke-width="1.8"/></svg>
<div class="a" style="left:1790px;top:551px;width:18px;height:17px;background:#262626;border-radius:3px;border:1px solid #5a5a5a"></div><svg class="a" style="left:1793px;top:554px" width="12" height="11" viewBox="0 0 12 11"><path d="M1 0V11M10 0V11" stroke="#e8e8e8" stroke-width="1.2"/><path d="M5.500 2V9" stroke="#e8e8e8" stroke-width="2"/></svg>
<div class="a" style="left:1808px;top:551px;width:18px;height:17px;background:#262626;border-radius:3px;border:1px solid #5a5a5a"></div><svg class="a" style="left:1811px;top:554px" width="12" height="11" viewBox="0 0 12 11"><path d="M0 1H12M0 10.500H12" stroke="#e8e8e8" stroke-width="1.2"/><path d="M2 5.500H10" stroke="#e8e8e8" stroke-width="2"/></svg>
<div class="a" style="left:1826px;top:551px;width:18px;height:17px;background:#262626;border-radius:3px;border:1px solid #5a5a5a"></div><svg class="a" style="left:1829px;top:554px" width="12" height="11" viewBox="0 0 12 11"><path d="M1 0.5H3M1 10.500H3M9 0.5H11M9 10.500H11M0.5 1V3M0.5 8V10M11.500 1V3M11.500 8V10" stroke="#e8e8e8" stroke-width="1"/><rect x="2.500" y="6" width="2" height="3" fill="#e8e8e8"/><rect x="5.500" y="4" width="2" height="3" fill="#e8e8e8"/><rect x="8" y="2.500" width="2" height="3" fill="#e8e8e8"/></svg>
<!-- s_bottom -->
<div class="a" style="left:494px;top:586px;width:1420px;height:22px;background:#1e1e1e"></div>
<div class="a" style="left:494px;top:586px;width:89px;height:22px;background:#454545;border-radius:4px 4px 0 0"></div>
<div class="t" style="top:588px;left:499px;color:#e8e8e8;letter-spacing:-0.82px">Scene Window</div>
<div class="a" style="left:584px;top:586px;width:100px;height:22px;background:#2a2a2a;border-radius:4px 4px 0 0"></div>
<div class="t" style="top:588px;left:589px;color:#e8e8e8;letter-spacing:-0.55px">JavaScript Editor</div>
<div class="a" style="left:685px;top:586px;width:112px;height:22px;background:#2a2a2a;border-radius:4px 4px 0 0"></div>
<div class="t" style="top:588px;left:690px;color:#e8e8e8;letter-spacing:-0.79px">Dependency Graph</div>
<div class="a" style="left:494px;top:608px;width:1420px;height:23px;background:#222"></div>
<div class="a" style="left:991px;top:630px;width:923px;height:2px;background:#262626"></div>
<div class="t" style="top:610px;left:523.3px;width:400px;text-align:center;color:#b8b8b8;letter-spacing:-0.59px">Composition 1</div>
<svg class="a" style="left:951px;top:616px" width="8" height="8" viewBox="0 0 8 8"><path d="M0.7 0.7L7.3 7.3M7.3 0.7L0.7 7.3" stroke="#a8a8a8" stroke-width="1" fill="none"/></svg>
<div class="a" style="left:969px;top:615px;width:1px;height:11px;background:#a0a0a0"></div>
<div class="t" style="top:610px;left:993.3px;width:400px;text-align:center;color:#b8b8b8;letter-spacing:-0.59px">Composition 2</div>
<svg class="a" style="left:1421px;top:616px" width="8" height="8" viewBox="0 0 8 8"><path d="M0.7 0.7L7.3 7.3M7.3 0.7L0.7 7.3" stroke="#a8a8a8" stroke-width="1" fill="none"/></svg>
<div class="a" style="left:1439px;top:610px;width:470px;height:20px;background:#454545;border-radius:5px 5px 0 0"></div>
<div class="t" style="top:610px;left:1463.3px;width:400px;text-align:center;color:#e8e8e8;letter-spacing:-0.59px">Composition 3</div>
<svg class="a" style="left:1892px;top:616px" width="8" height="8" viewBox="0 0 8 8"><path d="M0.7 0.7L7.3 7.3M7.3 0.7L0.7 7.3" stroke="#b8b8b8" stroke-width="1" fill="none"/></svg>
<div class="a" style="left:494px;top:631px;width:490px;height:345px;background:#2b2b2b"></div>
<div class="a" style="left:494px;top:631px;width:490px;height:24px;background:#454545"></div>
<div class="a" style="left:497px;top:632px;width:279px;height:20px;background:#2a2a2a;border-radius:10px"></div>
<svg class="a" style="left:500px;top:636px" width="13" height="13" viewBox="0 0 13 13"><circle cx="5.5" cy="5.5" r="4.3" fill="none" stroke="#d8d8d8" stroke-width="1.2"/><path d="M8.8 8.8L12 12" stroke="#d8d8d8" stroke-width="1.8"/></svg>
<div class="t" style="top:633px;left:520px;color:#8a8a8a;letter-spacing:-0.76px">Enter a layer name</div>
<div class="a" style="left:778px;top:632.5px;width:19.5px;height:19px;background:#282828;border-radius:4px;border:1px solid #222"></div><svg class="a" style="left:782.25px;top:636.5px" width="11" height="11" viewBox="0 0 11 11"><path d="M5.5 1V10M1 5.5H10" stroke="#e8e8e8" stroke-width="1.5" fill="none"/></svg><svg class="a" style="left:793.0px;top:647.0px" width="3" height="3" viewBox="0 0 3 3"><path d="M3 0V3H0Z" fill="#3fae85"/></svg>
<div class="a" style="left:822.2px;top:632.5px;width:19.5px;height:19px;background:#2a2a2a;border-radius:4px;border:1px solid #222"></div>
<div class="a" style="left:844.4px;top:632.5px;width:19.5px;height:19px;background:#2a2a2a;border-radius:4px;border:1px solid #222"></div>
<div class="a" style="left:866.4px;top:632.5px;width:19.5px;height:19px;background:#2a2a2a;border-radius:4px;border:1px solid #222"></div>
<svg class="a" style="left:826px;top:636px" width="14" height="13" viewBox="0 0 14 13"><circle cx="9" cy="4.500" r="4" fill="#e0e0e0"/><path d="M2 5Q0.5 9 4 11.500Q8 12.500 11 10" fill="none" stroke="#a0a0a0" stroke-width="1.8"/><path d="M4.500 6Q4 8.500 6.500 9.500" fill="none" stroke="#c0c0c0" stroke-width="1.2"/></svg>
<svg class="a" style="left:848px;top:636px" width="14" height="14" viewBox="0 0 14 14"><path d="M9 4.500Q9.400 8.100 13 8.500Q9.400 8.900 9 12.500Q8.600 8.900 5 8.500Q8.600 8.100 9 4.500Z" fill="#e0e0e0" stroke="#e0e0e0" stroke-width="0.5"/><circle cx="2.500" cy="2" r="1" fill="#e0e0e0"/><circle cx="8.500" cy="2" r="1" fill="#e0e0e0"/><circle cx="2.500" cy="8" r="1" fill="#e0e0e0"/><path d="M14 14V11.800L11.800 14Z" fill="#5cc8a4"/></svg>
<svg class="a" style="left:870px;top:636px" width="14" height="13" viewBox="0 0 14 13"><path d="M0 2H14M0 6.500H14M0 11H14" stroke="#e0e0e0" stroke-width="1" stroke-dasharray="4 2"/><circle cx="9" cy="2" r="1.600" fill="#2a2a2a" stroke="#e0e0e0"/><circle cx="5" cy="6.500" r="1.600" fill="#2a2a2a" stroke="#e0e0e0"/><circle cx="8" cy="11" r="1.600" fill="#2a2a2a" stroke="#e0e0e0"/><path d="M14 13V10.500L11.500 13Z" fill="#2ecc71"/></svg>
<div class="a" style="left:888.4px;top:632px;width:93.5px;height:19.6px;background:#2a2a2a;border-radius:3px"></div>
<div class="t" style="top:633px;left:893px;color:#505050">F</div>
<div class="t" style="top:633px;left:905px;color:#e8e8e8;letter-spacing:-0.9px">153</div>
<div class="a" style="left:494px;top:655px;width:490px;height:17px;background:#454545"></div>
<svg class="a" style="left:500px;top:657px" width="10" height="12" viewBox="0 0 10 12"><rect x="0.5" y="5" width="9" height="7" rx="1" fill="#d0d0d0"/><path d="M2.500 5V3.500A2.500 2.500 0 0 1 7.500 3.500V5" fill="none" stroke="#d0d0d0" stroke-width="1.3"/><circle cx="5" cy="8.500" r="1" fill="#454545"/></svg>
<svg class="a" style="left:517px;top:659px;opacity:1" width="14" height="10" viewBox="0 0 14 10"><path d="M0.6 5C3 1 11 1 13.4 5C11 9 3 9 0.6 5Z" fill="none" stroke="#d0d0d0" stroke-width="1"/><circle cx="7" cy="5" r="2.2" fill="#d0d0d0"/></svg>
<svg class="a" style="left:536px;top:656px" width="13" height="14" viewBox="0 0 13 14"><path d="M6.500 0.8L12.200 3.800V10.200L6.500 13.200L0.8 10.200V3.800Z" fill="none" stroke="#d0d0d0" stroke-width="1"/><path d="M0.8 3.800L6.500 6.800L12.200 3.800M6.500 6.800V13.200" fill="none" stroke="#d0d0d0" stroke-width="1"/></svg>
<svg class="a" style="left:555px;top:657px" width="15" height="12" viewBox="0 0 15 12"><path d="M0.5 4H3L7 0.8V11.200L3 8H0.5Z" fill="#d0d0d0"/><path d="M9 3.500Q10.500 6 9 8.500M11 1.500Q14 6 11 10.500" fill="none" stroke="#d0d0d0" stroke-width="1.1"/></svg>
<svg class="a" style="left:575px;top:657px" width="12" height="12" viewBox="0 0 12 12"><path d="M0.8 11.200L1.300 9L6.800 3.500L8.500 5.200L3 10.700Z" fill="#b8b8b8" opacity="0.85"/><path d="M6.200 2.600L9.400 5.800" stroke="#b8b8b8" stroke-width="1.700"/><path d="M7.600 4.400L9.600 2Q10.500 1.100 11.200 1.800Q11.900 2.500 11 3.400Z" fill="#b8b8b8" stroke="#b8b8b8" stroke-width="1.200"/></svg>
<svg class="a" style="left:594px;top:659px" width="14" height="9" viewBox="0 0 14 9"><path d="M0.3 4.5L3.5 0.5H12.5Q13.7 0.5 13.7 1.7V7.3Q13.7 8.5 12.5 8.5H3.5Z" fill="#d0d0d0"/><circle cx="4.300" cy="4.5" r="1.400" fill="#333"/></svg>
<div class="t" style="top:654px;left:649px;color:#e8e8e8;letter-spacing:-1.3px">Name</div>
<div class="a" style="left:494px;top:673px;width:477px;height:22px;background:#393939"></div>
<div class="a" style="left:496px;top:674px;width:18px;height:18px;background:#2a2a2a;border-radius:2px"></div>
<div class="a" style="left:515px;top:674px;width:18px;height:18px;background:#2a2a2a;border-radius:2px"></div>
<svg class="a" style="left:518px;top:677px" width="12" height="12" viewBox="0 0 12 12"><path d="M10.5 4.5A5 5 0 1 1 8 1.6" fill="none" stroke="#e0e0e0" stroke-width="1.1"/><path d="M3.5 5.8L5.8 8.2L10.8 2" fill="none" stroke="#e0e0e0" stroke-width="1.3"/></svg>
<div class="a" style="left:573px;top:675px;width:16.3px;height:16.3px;background:#6fe0a0;border-radius:3px;box-shadow:0 0.5px 0 0.6px #262626"></div>
<svg class="a" style="left:593px;top:678.3px" width="14" height="9" viewBox="0 0 14 9"><path d="M0.3 4.5L3.5 0.5H12.5Q13.7 0.5 13.7 1.7V7.3Q13.7 8.5 12.5 8.5H3.5Z" fill="#c8c8c8"/><circle cx="4.300" cy="4.5" r="1.400" fill="#333"/></svg>
<div class="a" style="left:611px;top:675px;width:31px;height:17px;background:#343434;border-radius:3px"></div>
<svg class="a" style="left:614px;top:681px" width="8" height="5" viewBox="0 0 8 5"><path d="M0.5 0.8L4.0 4L7.5 0.8" fill="none" stroke="#a0a0a0" stroke-width="1.1"/></svg>
<svg class="a" style="left:648px;top:676px" width="15" height="14" viewBox="0 0 15 14"><rect x="0.5" y="5" width="8.500" height="8.500" fill="#9cc8f5"/><rect x="4" y="8.500" width="5" height="5" fill="#3a3a3a" opacity="0"/><path d="M6.500 0.8H14.500M6.500 4H14.500M10.500 7.200H14.500" stroke="#ececec" stroke-width="1.1"/></svg>
<div class="t" style="top:674px;left:667px;color:#e8e8e8;letter-spacing:-0.38px">Color Array</div>
<div class="a" style="left:930px;top:675px;width:10.3px;height:16.5px;background:#2b2b2b;border-radius:3px"></div><div class="a" style="left:941px;top:675px;width:10.3px;height:16.5px;background:#2b2b2b;border-radius:3px"></div>
<svg class="a" style="left:931px;top:679.5px" width="8" height="8" viewBox="0 0 8 8"><path d="M0.800 4L3.700 1H6.300Q6.800 1 6.800 1.500V6.500Q6.800 7 6.300 7H3.700Z" fill="#d6ba5c"/></svg>
<svg class="a" style="left:942px;top:679.5px" width="8" height="8" viewBox="0 0 8 8"><path d="M7.200 4L4.300 1H1.700Q1.200 1 1.200 1.500V6.500Q1.200 7 1.700 7H4.300Z" fill="#c85af0"/></svg>
<svg class="a" style="left:956px;top:678.2px" width="10" height="10" viewBox="0 0 10 10"><circle cx="5" cy="5" r="4.2" fill="none" stroke="#8a8a8a" stroke-width="1.1"/></svg>
<div class="a" style="left:494px;top:695px;width:477px;height:22px;background:#393939"></div>
<div class="a" style="left:496px;top:696px;width:18px;height:18px;background:#2a2a2a;border-radius:2px"></div>
<div class="a" style="left:515px;top:696px;width:18px;height:18px;background:#2a2a2a;border-radius:2px"></div>
<svg class="a" style="left:518px;top:699px" width="12" height="12" viewBox="0 0 12 12"><path d="M10.5 4.5A5 5 0 1 1 8 1.6" fill="none" stroke="#e0e0e0" stroke-width="1.1"/><path d="M3.5 5.8L5.8 8.2L10.8 2" fill="none" stroke="#e0e0e0" stroke-width="1.3"/></svg>
<div class="a" style="left:573px;top:697px;width:16.3px;height:16.3px;background:#cdf07e;border-radius:3px;box-shadow:0 0.5px 0 0.6px #262626"></div>
<svg class="a" style="left:593px;top:700.3px" width="14" height="9" viewBox="0 0 14 9"><path d="M0.3 4.5L3.5 0.5H12.5Q13.7 0.5 13.7 1.7V7.3Q13.7 8.5 12.5 8.5H3.5Z" fill="#c8c8c8"/><circle cx="4.300" cy="4.5" r="1.400" fill="#333"/></svg>
<svg class="a" style="left:667px;top:698px" width="15" height="14" viewBox="0 0 15 14"><path d="M1.0 1.0L4.0 4.0M4.0 1.0L1.0 4.0" stroke="#8fd08a" stroke-width="1"/><path d="M10.0 2.0L13.0 5.0M13.0 2.0L10.0 5.0" stroke="#8fd08a" stroke-width="1"/><path d="M2.0 9.0L5.0 12.0M5.0 9.0L2.0 12.0" stroke="#8fd08a" stroke-width="1"/><path d="M10.5 9.5L13.5 12.5M13.5 9.5L10.5 12.5" stroke="#8fd08a" stroke-width="1"/><rect x="6.500" y="6" width="2" height="2" fill="#8fd08a"/><rect x="9" y="0.5" width="1.500" height="1.500" fill="#8fd08a"/></svg>
<div class="t" style="top:696px;left:686px;color:#e8e8e8;letter-spacing:-0.74px">Random [Index]</div>
<div class="a" style="left:930px;top:697px;width:10.3px;height:16.5px;background:#2b2b2b;border-radius:3px"></div><div class="a" style="left:941px;top:697px;width:10.3px;height:16.5px;background:#2b2b2b;border-radius:3px"></div>
<svg class="a" style="left:931px;top:701.5px" width="8" height="8" viewBox="0 0 8 8"><path d="M0.800 4L3.700 1H6.300Q6.800 1 6.800 1.500V6.500Q6.800 7 6.300 7H3.700Z" fill="#7a7a7a"/></svg>
<svg class="a" style="left:942px;top:701.5px" width="8" height="8" viewBox="0 0 8 8"><path d="M7.200 4L4.300 1H1.700Q1.200 1 1.200 1.500V6.500Q1.200 7 1.700 7H4.300Z" fill="#c85af0"/></svg>
<svg class="a" style="left:956px;top:700.2px" width="10" height="10" viewBox="0 0 10 10"><circle cx="5" cy="5" r="4.2" fill="none" stroke="#8a8a8a" stroke-width="1.1"/></svg>
<div class="a" style="left:494px;top:717px;width:477px;height:22px;background:#393939"></div>
<div class="a" style="left:496px;top:718px;width:18px;height:18px;background:#2a2a2a;border-radius:2px"></div>
<div class="a" style="left:515px;top:718px;width:18px;height:18px;background:#2a2a2a;border-radius:2px"></div>
<svg class="a" style="left:518px;top:721px" width="12" height="12" viewBox="0 0 12 12"><path d="M10.5 4.5A5 5 0 1 1 8 1.6" fill="none" stroke="#e0e0e0" stroke-width="1.1"/><path d="M3.5 5.8L5.8 8.2L10.8 2" fill="none" stroke="#e0e0e0" stroke-width="1.3"/></svg>
<div class="a" style="left:573px;top:719px;width:16.3px;height:16.3px;background:#cdf07e;border-radius:3px;box-shadow:0 0.5px 0 0.6px #262626"></div>
<svg class="a" style="left:593px;top:722.3px" width="14" height="9" viewBox="0 0 14 9"><path d="M0.3 4.5L3.5 0.5H12.5Q13.7 0.5 13.7 1.7V7.3Q13.7 8.5 12.5 8.5H3.5Z" fill="#c8c8c8"/><circle cx="4.300" cy="4.5" r="1.400" fill="#333"/></svg>
<svg class="a" style="left:646px;top:721px" width="18" height="12" viewBox="0 0 18 12"><path d="M0.5 5.500C1.500 5.500 2 2.500 3.500 2.500C5.500 2.500 5.500 10.500 7.500 10.500S9.500 2.500 11.500 2.500S13.500 10.500 15.500 10.500C16.500 10.500 17 8.500 17.500 7" fill="none" stroke="#7fd08a" stroke-width="1.2"/></svg>
<div class="t" style="top:718px;left:667px;color:#e8e8e8;letter-spacing:-0.52px">Oscillator [Position.Z] Cosine</div>
<div class="a" style="left:930px;top:719px;width:10.3px;height:16.5px;background:#2b2b2b;border-radius:3px"></div><div class="a" style="left:941px;top:719px;width:10.3px;height:16.5px;background:#2b2b2b;border-radius:3px"></div>
<svg class="a" style="left:931px;top:723.5px" width="8" height="8" viewBox="0 0 8 8"><path d="M0.800 4L3.700 1H6.300Q6.800 1 6.800 1.500V6.500Q6.800 7 6.300 7H3.700Z" fill="#d6ba5c"/></svg>
<svg class="a" style="left:942px;top:723.5px" width="8" height="8" viewBox="0 0 8 8"><path d="M7.200 4L4.300 1H1.700Q1.200 1 1.200 1.500V6.500Q1.200 7 1.700 7H4.300Z" fill="#c85af0"/></svg>
<svg class="a" style="left:956px;top:722.2px" width="10" height="10" viewBox="0 0 10 10"><circle cx="5" cy="5" r="4.2" fill="none" stroke="#8a8a8a" stroke-width="1.1"/></svg>
<div class="a" style="left:494px;top:739px;width:477px;height:22px;background:#393939"></div>
<div class="a" style="left:496px;top:740px;width:18px;height:18px;background:#2a2a2a;border-radius:2px"></div>
<div class="a" style="left:515px;top:740px;width:18px;height:18px;background:#2a2a2a;border-radius:2px"></div>
<svg class="a" style="left:518px;top:743px" width="12" height="12" viewBox="0 0 12 12"><path d="M10.5 4.5A5 5 0 1 1 8 1.6" fill="none" stroke="#e0e0e0" stroke-width="1.1"/><path d="M3.5 5.8L5.8 8.2L10.8 2" fill="none" stroke="#e0e0e0" stroke-width="1.3"/></svg>
<div class="a" style="left:573px;top:741px;width:16.3px;height:16.3px;background:#cdf07e;border-radius:3px;box-shadow:0 0.5px 0 0.6px #262626"></div>
<svg class="a" style="left:593px;top:744.3px" width="14" height="9" viewBox="0 0 14 9"><path d="M0.3 4.5L3.5 0.5H12.5Q13.7 0.5 13.7 1.7V7.3Q13.7 8.5 12.5 8.5H3.5Z" fill="#c8c8c8"/><circle cx="4.300" cy="4.5" r="1.400" fill="#333"/></svg>
<svg class="a" style="left:646px;top:743px" width="18" height="12" viewBox="0 0 18 12"><path d="M0.5 5.500C1.500 5.500 2 2.500 3.500 2.500C5.500 2.500 5.500 10.500 7.500 10.500S9.500 2.500 11.500 2.500S13.500 10.500 15.500 10.500C16.500 10.500 17 8.500 17.500 7" fill="none" stroke="#7fd08a" stroke-width="1.2"/></svg>
<div class="t" style="top:740px;left:667px;color:#e8e8e8;letter-spacing:-0.49px">Oscillator [Position.X] Sine Driver</div>
<div class="a" style="left:930px;top:741px;width:10.3px;height:16.5px;background:#2b2b2b;border-radius:3px"></div><div class="a" style="left:941px;top:741px;width:10.3px;height:16.5px;background:#2b2b2b;border-radius:3px"></div>
<div class="a" style="left:930px;top:741px;width:10.3px;height:16.5px;border-radius:3px;border:1px solid #c8a84a"></div>
<svg class="a" style="left:931px;top:745.5px" width="8" height="8" viewBox="0 0 8 8"><path d="M0.800 4L3.700 1H6.300Q6.800 1 6.800 1.500V6.500Q6.800 7 6.300 7H3.700Z" fill="#d6ba5c"/></svg>
<svg class="a" style="left:942px;top:745.5px" width="8" height="8" viewBox="0 0 8 8"><path d="M7.200 4L4.300 1H1.700Q1.200 1 1.200 1.500V6.500Q1.200 7 1.700 7H4.300Z" fill="#c85af0"/></svg>
<svg class="a" style="left:956px;top:744.2px" width="10" height="10" viewBox="0 0 10 10"><circle cx="5" cy="5" r="4.2" fill="none" stroke="#8a8a8a" stroke-width="1.1"/></svg>
<div class="a" style="left:494px;top:761px;width:477px;height:22px;background:#393939"></div>
<div class="a" style="left:496px;top:762px;width:18px;height:18px;background:#2a2a2a;border-radius:2px"></div>
<div class="a" style="left:515px;top:762px;width:18px;height:18px;background:#2a2a2a;border-radius:2px"></div>
<svg class="a" style="left:518px;top:765px" width="12" height="12" viewBox="0 0 12 12"><path d="M10.5 4.5A5 5 0 1 1 8 1.6" fill="none" stroke="#e0e0e0" stroke-width="1.1"/><path d="M3.5 5.8L5.8 8.2L10.8 2" fill="none" stroke="#e0e0e0" stroke-width="1.3"/></svg>
<div class="a" style="left:573px;top:763px;width:16.3px;height:16.3px;background:#6a93ec;border-radius:3px;box-shadow:0 0.5px 0 0.6px #262626"></div>
<svg class="a" style="left:593px;top:766.3px" width="14" height="9" viewBox="0 0 14 9"><path d="M0.3 4.5L3.5 0.5H12.5Q13.7 0.5 13.7 1.7V7.3Q13.7 8.5 12.5 8.5H3.5Z" fill="#c8c8c8"/><circle cx="4.300" cy="4.5" r="1.400" fill="#333"/></svg>
<svg class="a" style="left:648px;top:763px" width="15" height="15" viewBox="0 0 15 15"><rect x="0.5" y="5" width="9" height="9.500" fill="#9cc8f5"/><path d="M5 7.500V12.500" stroke="#2a2a2a" stroke-width="1.5"/><path d="M10 0L10.800 2.700L13.500 3.500L10.800 4.300L10 7L9.200 4.300L6.500 3.500L9.200 2.700Z" fill="#e0e0e0"/><path d="M13 6L13.400 7.100L14.500 7.500L13.400 7.900L13 9L12.600 7.900L11.500 7.500L12.600 7.100Z" fill="#e0e0e0"/></svg>
<div class="t" style="top:762px;left:667px;color:#e8e8e8;letter-spacing:-0.53px">Index Context [Number]</div>
<div class="a" style="left:930px;top:763px;width:10.3px;height:16.5px;background:#2b2b2b;border-radius:3px"></div><div class="a" style="left:941px;top:763px;width:10.3px;height:16.5px;background:#2b2b2b;border-radius:3px"></div>
<svg class="a" style="left:931px;top:767.5px" width="8" height="8" viewBox="0 0 8 8"><path d="M0.800 4L3.700 1H6.300Q6.800 1 6.800 1.500V6.500Q6.800 7 6.300 7H3.700Z" fill="#7a7a7a"/></svg>
<svg class="a" style="left:942px;top:767.5px" width="8" height="8" viewBox="0 0 8 8"><path d="M7.200 4L4.300 1H1.700Q1.200 1 1.200 1.500V6.500Q1.200 7 1.700 7H4.300Z" fill="#c85af0"/></svg>
<svg class="a" style="left:956px;top:766.2px" width="10" height="10" viewBox="0 0 10 10"><circle cx="5" cy="5" r="4.2" fill="none" stroke="#8a8a8a" stroke-width="1.1"/></svg>
<div class="a" style="left:494px;top:783px;width:477px;height:22px;background:#393939"></div>
<div class="a" style="left:496px;top:784px;width:18px;height:18px;background:#2a2a2a;border-radius:2px"></div>
<div class="a" style="left:515px;top:784px;width:18px;height:18px;background:#2a2a2a;border-radius:2px"></div>
<svg class="a" style="left:518px;top:787px" width="12" height="12" viewBox="0 0 12 12"><path d="M10.5 4.5A5 5 0 1 1 8 1.6" fill="none" stroke="#e0e0e0" stroke-width="1.1"/><path d="M3.5 5.8L5.8 8.2L10.8 2" fill="none" stroke="#e0e0e0" stroke-width="1.3"/></svg>
<div class="a" style="left:573px;top:785px;width:16.3px;height:16.3px;background:#6a93ec;border-radius:3px;box-shadow:0 0.5px 0 0.6px #262626"></div>
<svg class="a" style="left:593px;top:788.3px" width="14" height="9" viewBox="0 0 14 9"><path d="M0.3 4.5L3.5 0.5H12.5Q13.7 0.5 13.7 1.7V7.3Q13.7 8.5 12.5 8.5H3.5Z" fill="#c8c8c8"/><circle cx="4.300" cy="4.5" r="1.400" fill="#333"/></svg>
<svg class="a" style="left:647px;top:787px" width="16" height="12" viewBox="0 0 16 12"><text x="0.5" y="7" font-family="Liberation Sans, sans-serif" font-size="8.500" fill="#b8d8f8" letter-spacing="-0.3">abc</text><path d="M0.5 8.500H15M0.5 11H3M5 11H9M11 11H15" stroke="#e0e0e0" stroke-width="0.9"/></svg>
<div class="t" style="top:784px;left:667px;color:#e8e8e8;letter-spacing:-0.49px">String Generator [String]</div>
<div class="a" style="left:930px;top:785px;width:10.3px;height:16.5px;background:#2b2b2b;border-radius:3px"></div><div class="a" style="left:941px;top:785px;width:10.3px;height:16.5px;background:#2b2b2b;border-radius:3px"></div>
<svg class="a" style="left:931px;top:789.5px" width="8" height="8" viewBox="0 0 8 8"><path d="M0.800 4L3.700 1H6.300Q6.800 1 6.800 1.500V6.500Q6.800 7 6.300 7H3.700Z" fill="#d6ba5c"/></svg>
<svg class="a" style="left:942px;top:789.5px" width="8" height="8" viewBox="0 0 8 8"><path d="M7.200 4L4.300 1H1.700Q1.200 1 1.200 1.500V6.500Q1.200 7 1.700 7H4.300Z" fill="#c85af0"/></svg>
<svg class="a" style="left:956px;top:788.2px" width="10" height="10" viewBox="0 0 10 10"><circle cx="5" cy="5" r="4.2" fill="none" stroke="#8a8a8a" stroke-width="1.1"/></svg>
<div class="a" style="left:494px;top:805px;width:477px;height:22px;background:#393939"></div>
<div class="a" style="left:496px;top:806px;width:18px;height:18px;background:#2a2a2a;border-radius:2px"></div>
<div class="a" style="left:515px;top:806px;width:18px;height:18px;background:#2a2a2a;border-radius:2px"></div>
<svg class="a" style="left:518px;top:809px" width="12" height="12" viewBox="0 0 12 12"><path d="M10.5 4.5A5 5 0 1 1 8 1.6" fill="none" stroke="#e0e0e0" stroke-width="1.1"/><path d="M3.5 5.8L5.8 8.2L10.8 2" fill="none" stroke="#e0e0e0" stroke-width="1.3"/></svg>
<div class="a" style="left:573px;top:807px;width:16.3px;height:16.3px;background:#c6f07e;border-radius:3px;box-shadow:0 0.5px 0 0.6px #262626"></div>
<svg class="a" style="left:593px;top:810.3px" width="14" height="9" viewBox="0 0 14 9"><path d="M0.3 4.5L3.5 0.5H12.5Q13.7 0.5 13.7 1.7V7.3Q13.7 8.5 12.5 8.5H3.5Z" fill="#c8c8c8"/><circle cx="4.300" cy="4.5" r="1.400" fill="#333"/></svg>
<svg class="a" style="left:647px;top:807px" width="16" height="16" viewBox="0 0 16 16"><path d="M3.500 2V12.500H14" fill="none" stroke="#d8d8d8" stroke-width="1"/><path d="M3.500 12.500L9.500 6.500M6.800 6.300H9.700V9.200" fill="none" stroke="#d8d8d8" stroke-width="1"/><path d="M1.500 3.800L3.500 1.500L5.500 3.800" fill="none" stroke="#6fc07a" stroke-width="1"/><path d="M12.200 10.500L14.500 12.500L12.200 14.500" fill="none" stroke="#6fc07a" stroke-width="1"/></svg>
<div class="t" style="top:806px;left:667px;color:#e8e8e8;letter-spacing:-0.29px">3D Matrix [Duplicator]</div>
<div class="a" style="left:930px;top:807px;width:10.3px;height:16.5px;background:#2b2b2b;border-radius:3px"></div><div class="a" style="left:941px;top:807px;width:10.3px;height:16.5px;background:#2b2b2b;border-radius:3px"></div>
<div class="a" style="left:941px;top:807px;width:10.3px;height:16.5px;border-radius:3px;border:1px solid #c060d8"></div>
<svg class="a" style="left:931px;top:811.5px" width="8" height="8" viewBox="0 0 8 8"><path d="M0.800 4L3.700 1H6.300Q6.800 1 6.800 1.500V6.500Q6.800 7 6.300 7H3.700Z" fill="#d6ba5c"/></svg>
<svg class="a" style="left:942px;top:811.5px" width="8" height="8" viewBox="0 0 8 8"><path d="M7.200 4L4.300 1H1.700Q1.200 1 1.200 1.500V6.500Q1.200 7 1.700 7H4.300Z" fill="#c85af0"/></svg>
<svg class="a" style="left:956px;top:810.2px" width="10" height="10" viewBox="0 0 10 10"><circle cx="5" cy="5" r="4.2" fill="none" stroke="#8a8a8a" stroke-width="1.1"/></svg>
<div class="a" style="left:494px;top:827px;width:477px;height:21px;background:#5c5744;border-radius:0 4px 4px 0"></div>
<div class="a" style="left:496px;top:828px;width:18px;height:18px;background:#2a2a2a;border-radius:2px"></div>
<div class="a" style="left:515px;top:828px;width:18px;height:18px;background:#2a2a2a;border-radius:2px"></div>
<svg class="a" style="left:517px;top:833px;opacity:1" width="14" height="10" viewBox="0 0 14 10"><path d="M0.6 5C3 1 11 1 13.4 5C11 9 3 9 0.6 5Z" fill="none" stroke="#e8e8e8" stroke-width="1"/><circle cx="7" cy="5" r="2.2" fill="#e8e8e8"/></svg>
<div class="a" style="left:534px;top:828px;width:18px;height:18px;background:#2a2a2a;border-radius:2px"></div>
<div class="a" style="left:573px;top:829px;width:16.3px;height:16.3px;background:#ffe680;border-radius:3px;box-shadow:0 0.5px 0 0.6px #262626"></div>
<svg class="a" style="left:593px;top:832.3px" width="14" height="9" viewBox="0 0 14 9"><path d="M0.3 4.5L3.5 0.5H12.5Q13.7 0.5 13.7 1.7V7.3Q13.7 8.5 12.5 8.5H3.5Z" fill="#c8c8c8"/><circle cx="4.300" cy="4.5" r="1.400" fill="#333"/></svg>
<svg class="a" style="left:648px;top:831px" width="12" height="12" viewBox="0 0 12 12"><rect x="0.5" y="0.5" width="2" height="2" fill="#e6d36c"/><rect x="0.5" y="5.0" width="2" height="2" fill="#e6d36c"/><rect x="0.5" y="9.5" width="2" height="2" fill="#e6d36c"/><rect x="5.0" y="0.5" width="2" height="2" fill="#e6d36c"/><rect x="5.0" y="5.0" width="2" height="2" fill="#e6d36c"/><rect x="5.0" y="9.5" width="2" height="2" fill="#e6d36c"/><rect x="9.5" y="0.5" width="2" height="2" fill="#e6d36c"/><rect x="9.5" y="5.0" width="2" height="2" fill="#e6d36c"/><rect x="9.5" y="9.5" width="2" height="2" fill="#e6d36c"/></svg>
<div class="t" style="top:828px;left:667px;color:#e8e8e8;letter-spacing:-0.33px">Duplicator</div>
<div class="a" style="left:930px;top:829px;width:10.3px;height:16.5px;background:#2b2b2b;border-radius:3px"></div><div class="a" style="left:941px;top:829px;width:10.3px;height:16.5px;background:#2b2b2b;border-radius:3px"></div>
<svg class="a" style="left:931px;top:833.5px" width="8" height="8" viewBox="0 0 8 8"><path d="M0.800 4L3.700 1H6.300Q6.800 1 6.800 1.500V6.500Q6.800 7 6.300 7H3.700Z" fill="#d6ba5c"/></svg>
<svg class="a" style="left:942px;top:833.5px" width="8" height="8" viewBox="0 0 8 8"><path d="M7.200 4L4.300 1H1.700Q1.200 1 1.200 1.500V6.500Q1.200 7 1.700 7H4.300Z" fill="#c85af0"/></svg>
<svg class="a" style="left:956px;top:832.2px" width="10" height="10" viewBox="0 0 10 10"><circle cx="5" cy="5" r="4.2" fill="none" stroke="#8a8a8a" stroke-width="1.1"/></svg>
<div class="a" style="left:494px;top:849px;width:477px;height:22px;background:#393939"></div>
<div class="a" style="left:496px;top:850px;width:18px;height:18px;background:#2a2a2a;border-radius:2px"></div>
<div class="a" style="left:515px;top:850px;width:18px;height:18px;background:#2a2a2a;border-radius:2px"></div>
<div class="a" style="left:534px;top:850px;width:18px;height:18px;background:#2a2a2a;border-radius:2px"></div>
<div class="a" style="left:573px;top:851px;width:16.3px;height:16.3px;background:#ffe680;border-radius:3px;box-shadow:0 0.5px 0 0.6px #262626"></div>
<svg class="a" style="left:593px;top:854.3px" width="14" height="9" viewBox="0 0 14 9"><path d="M0.3 4.5L3.5 0.5H12.5Q13.7 0.5 13.7 1.7V7.3Q13.7 8.5 12.5 8.5H3.5Z" fill="#c8c8c8"/><circle cx="4.300" cy="4.5" r="1.400" fill="#333"/></svg>
<div class="a" style="left:611px;top:851px;width:31px;height:17px;background:#343434;border-radius:3px"></div>
<svg class="a" style="left:614px;top:857px" width="8" height="5" viewBox="0 0 8 5"><path d="M0.5 0.8L4.0 4L7.5 0.8" fill="none" stroke="#a0a0a0" stroke-width="1.1"/></svg>
<svg class="a" style="left:648px;top:852px" width="14" height="14" viewBox="0 0 14 14"><path d="M4 1.500H10M4 12.500H10M1.500 4V10M12.500 4V10" fill="none" stroke="#e6d36c" stroke-width="1.1"/><rect x="0.5" y="0.5" width="2" height="2" fill="#f0f0f0"/><rect x="11.5" y="0.5" width="2" height="2" fill="#f0f0f0"/><rect x="0.5" y="11.5" width="2" height="2" fill="#f0f0f0"/><rect x="11.5" y="11.5" width="2" height="2" fill="#f0f0f0"/></svg>
<div class="t" style="top:850px;left:667px;color:#a8a8a8;letter-spacing:-0.96px">Ellipse Shape</div>
<div class="a" style="left:930px;top:851px;width:10.3px;height:16.5px;background:#2b2b2b;border-radius:3px"></div><div class="a" style="left:941px;top:851px;width:10.3px;height:16.5px;background:#2b2b2b;border-radius:3px"></div>
<div class="a" style="left:941px;top:851px;width:10.3px;height:16.5px;border-radius:3px;border:1px solid #c060d8"></div>
<svg class="a" style="left:931px;top:855.5px" width="8" height="8" viewBox="0 0 8 8"><path d="M0.800 4L3.700 1H6.300Q6.800 1 6.800 1.500V6.500Q6.800 7 6.300 7H3.700Z" fill="#d6ba5c"/></svg>
<svg class="a" style="left:942px;top:855.5px" width="8" height="8" viewBox="0 0 8 8"><path d="M7.200 4L4.300 1H1.700Q1.200 1 1.200 1.500V6.500Q1.200 7 1.700 7H4.300Z" fill="#c85af0"/></svg>
<svg class="a" style="left:956px;top:854.2px" width="10" height="10" viewBox="0 0 10 10"><circle cx="5" cy="5" r="4.2" fill="none" stroke="#8a8a8a" stroke-width="1.1"/></svg>
<div class="a" style="left:494px;top:871px;width:477px;height:22px;background:#393939"></div>
<div class="a" style="left:496px;top:872px;width:18px;height:18px;background:#2a2a2a;border-radius:2px"></div>
<div class="a" style="left:515px;top:872px;width:18px;height:18px;background:#2a2a2a;border-radius:2px"></div>
<svg class="a" style="left:517px;top:877px;opacity:1" width="14" height="10" viewBox="0 0 14 10"><path d="M0.6 5C3 1 11 1 13.4 5C11 9 3 9 0.6 5Z" fill="none" stroke="#5a5a5a" stroke-width="1"/><circle cx="7" cy="5" r="2.2" fill="#5a5a5a"/></svg>
<div class="a" style="left:534px;top:872px;width:18px;height:18px;background:#2a2a2a;border-radius:2px"></div>
<div class="a" style="left:573px;top:873px;width:16.3px;height:16.3px;background:#b794ff;border-radius:3px;box-shadow:0 0.5px 0 0.6px #262626"></div>
<svg class="a" style="left:593px;top:876.3px" width="14" height="9" viewBox="0 0 14 9"><path d="M0.3 4.5L3.5 0.5H12.5Q13.7 0.5 13.7 1.7V7.3Q13.7 8.5 12.5 8.5H3.5Z" fill="#c8c8c8"/><circle cx="4.300" cy="4.5" r="1.400" fill="#333"/></svg>
<svg class="a" style="left:666px;top:873px" width="16" height="16" viewBox="0 0 16 16"><path d="M4 1.500H12M4 14.500H12M1.500 4V12M14.500 4V12" fill="none" stroke="#e0e0e0" stroke-width="1"/><rect x="0.5" y="0.5" width="2" height="2" fill="#e0e0e0"/><rect x="13.500" y="0.5" width="2" height="2" fill="#e0e0e0"/><rect x="0.5" y="13.500" width="2" height="2" fill="#e0e0e0"/><rect x="13.500" y="13.500" width="2" height="2" fill="#e0e0e0"/><path d="M4.500 4.500H11.500V6.500H9V12H7V6.500H4.500Z" fill="#e6d36c"/></svg>
<div class="t" style="top:872px;left:686px;color:#a8a8a8;letter-spacing:-0.7px">Cavalry</div>
<div class="a" style="left:930px;top:873px;width:10.3px;height:16.5px;background:#2b2b2b;border-radius:3px"></div><div class="a" style="left:941px;top:873px;width:10.3px;height:16.5px;background:#2b2b2b;border-radius:3px"></div>
<svg class="a" style="left:931px;top:877.5px" width="8" height="8" viewBox="0 0 8 8"><path d="M0.800 4L3.700 1H6.300Q6.800 1 6.800 1.500V6.500Q6.800 7 6.300 7H3.700Z" fill="#d6ba5c"/></svg>
<svg class="a" style="left:942px;top:877.5px" width="8" height="8" viewBox="0 0 8 8"><path d="M7.200 4L4.300 1H1.700Q1.200 1 1.200 1.500V6.500Q1.200 7 1.700 7H4.300Z" fill="#7a7a7a"/></svg>
<svg class="a" style="left:956px;top:876.2px" width="10" height="10" viewBox="0 0 10 10"><circle cx="5" cy="5" r="4.2" fill="none" stroke="#8a8a8a" stroke-width="1.1"/></svg>
<div class="a" style="left:972px;top:673px;width:10px;height:290px;background:#333"></div>
<div class="a" style="left:973px;top:673px;width:9px;height:288px;background:#4e4e4e;border-radius:5px"></div>
<div class="a" style="left:494px;top:963px;width:478px;height:12px;background:#2e2e2e"></div>
<div class="a" style="left:495px;top:964px;width:474px;height:10px;background:#4e4e4e;border-radius:5px"></div>
<div class="a" style="left:494px;top:976px;width:490px;height:22px;background:#454545"></div>
<div class="a" style="left:497px;top:977px;width:20px;height:20px;background:#2a2a2a;border-radius:4px;border:1px solid #555"></div>
<svg class="a" style="left:500px;top:983px" width="14" height="9" viewBox="0 0 14 9"><path d="M0.3 4.5L3.5 0.5H12.5Q13.7 0.5 13.7 1.7V7.3Q13.7 8.5 12.5 8.5H3.5Z" fill="#e0e0e0"/><circle cx="4.300" cy="4.5" r="1.400" fill="#333"/></svg>
<div class="t" style="top:978px;left:520px;color:#e8e8e8;letter-spacing:-0.78px">1 selected</div>
<div class="a" style="left:775px;top:977px;width:20px;height:20px;background:#2a2a2a;border-radius:4px;border:1px solid #555"></div>
<svg class="a" style="left:780px;top:982px" width="10" height="10" viewBox="0 0 10 10"><rect x="0.5" y="0.5" width="9" height="9" fill="none" stroke="#e0e0e0" stroke-width="1"/><rect x="4" y="4" width="2" height="2" fill="#e0e0e0"/></svg>
<div class="a" style="left:798px;top:978px;width:183px;height:18px;background:#585858;border-radius:4px"></div>
<div class="a" style="left:799px;top:978px;width:86px;height:18px;background:#1e1e1e;border-radius:4px"></div>
<svg class="a" style="left:805px;top:982px" width="12" height="10" viewBox="0 0 12 10"><path d="M1 1H10M3 5H12M1 9H10" stroke="#2ecc71" stroke-width="1.8"/></svg>
<div class="t" style="top:978px;left:821px;color:#e8e8e8;letter-spacing:-0.57px">Time Editor</div>
<svg class="a" style="left:893px;top:981px" width="13" height="12" viewBox="0 0 13 12"><path d="M1.500 0V11.500M0 10H13" stroke="#d0d0d0" stroke-width="1"/><path d="M1.500 10L11.500 1.500" stroke="#d0d0d0" stroke-width="1"/></svg>
<div class="t" style="top:978px;left:910px;color:#e8e8e8;letter-spacing:-0.59px">Graph Editor</div>
<div class="a" style="left:986px;top:807px;width:1px;height:1px;background:#8a8a8a"></div>
<div class="a" style="left:986px;top:809px;width:1px;height:1px;background:#8a8a8a"></div>
<div class="a" style="left:986px;top:811px;width:1px;height:1px;background:#8a8a8a"></div>
<div class="a" style="left:986px;top:813px;width:1px;height:1px;background:#8a8a8a"></div>
<div class="a" style="left:986px;top:815px;width:1px;height:1px;background:#8a8a8a"></div>
<div class="a" style="left:986px;top:817px;width:1px;height:1px;background:#8a8a8a"></div>
<div class="a" style="left:986px;top:819px;width:1px;height:1px;background:#8a8a8a"></div>
<div class="a" style="left:986px;top:821px;width:1px;height:1px;background:#8a8a8a"></div>
<div class="a" style="left:984px;top:631px;width:4.5px;height:367px;background:#2b2b2b"></div>
<div class="a" style="left:988.5px;top:631px;width:3px;height:367px;background:#1f1f1f"></div>
<div class="a" style="left:991px;top:631px;width:923px;height:345px;background:#262626"></div>
<div class="a" style="left:1000px;top:646px;width:1px;height:8px;background:#9a9a9a"></div>
<div class="a" style="left:1010px;top:650px;width:1px;height:4px;background:#7a7a7a"></div>
<div class="a" style="left:1021px;top:650px;width:1px;height:4px;background:#7a7a7a"></div>
<div class="a" style="left:1032px;top:650px;width:1px;height:4px;background:#7a7a7a"></div>
<div class="a" style="left:1043px;top:650px;width:1px;height:4px;background:#7a7a7a"></div>
<div class="a" style="left:1054px;top:646px;width:1px;height:8px;background:#9a9a9a"></div>
<div class="a" style="left:1065px;top:650px;width:1px;height:4px;background:#7a7a7a"></div>
<div class="a" style="left:1076px;top:650px;width:1px;height:4px;background:#7a7a7a"></div>
<div class="a" style="left:1086px;top:650px;width:1px;height:4px;background:#7a7a7a"></div>
<div class="a" style="left:1097px;top:650px;width:1px;height:4px;background:#7a7a7a"></div>
<div class="a" style="left:1108px;top:646px;width:1px;height:8px;background:#9a9a9a"></div>
<div class="a" style="left:1119px;top:650px;width:1px;height:4px;background:#7a7a7a"></div>
<div class="a" style="left:1130px;top:650px;width:1px;height:4px;background:#7a7a7a"></div>
<div class="a" style="left:1141px;top:650px;width:1px;height:4px;background:#7a7a7a"></div>
<div class="a" style="left:1152px;top:650px;width:1px;height:4px;background:#7a7a7a"></div>
<div class="a" style="left:1162px;top:646px;width:1px;height:8px;background:#9a9a9a"></div>
<div class="a" style="left:1173px;top:650px;width:1px;height:4px;background:#7a7a7a"></div>
<div class="a" style="left:1184px;top:650px;width:1px;height:4px;background:#7a7a7a"></div>
<div class="a" style="left:1195px;top:650px;width:1px;height:4px;background:#7a7a7a"></div>
<div class="a" style="left:1206px;top:650px;width:1px;height:4px;background:#7a7a7a"></div>
<div class="a" style="left:1217px;top:646px;width:1px;height:8px;background:#9a9a9a"></div>
<div class="a" style="left:1228px;top:650px;width:1px;height:4px;background:#7a7a7a"></div>
<div class="a" style="left:1238px;top:650px;width:1px;height:4px;background:#7a7a7a"></div>
<div class="a" style="left:1249px;top:650px;width:1px;height:4px;background:#7a7a7a"></div>
<div class="a" style="left:1260px;top:650px;width:1px;height:4px;background:#7a7a7a"></div>
<div class="a" style="left:1271px;top:646px;width:1px;height:8px;background:#9a9a9a"></div>
<div class="a" style="left:1282px;top:650px;width:1px;height:4px;background:#7a7a7a"></div>
<div class="a" style="left:1293px;top:650px;width:1px;height:4px;background:#7a7a7a"></div>
<div class="a" style="left:1304px;top:650px;width:1px;height:4px;background:#7a7a7a"></div>
<div class="a" style="left:1314px;top:650px;width:1px;height:4px;background:#7a7a7a"></div>
<div class="a" style="left:1325px;top:646px;width:1px;height:8px;background:#9a9a9a"></div>
<div class="a" style="left:1336px;top:650px;width:1px;height:4px;background:#7a7a7a"></div>
<div class="a" style="left:1347px;top:650px;width:1px;height:4px;background:#7a7a7a"></div>
<div class="a" style="left:1358px;top:650px;width:1px;height:4px;background:#7a7a7a"></div>
<div class="a" style="left:1369px;top:650px;width:1px;height:4px;background:#7a7a7a"></div>
<div class="a" style="left:1380px;top:646px;width:1px;height:8px;background:#9a9a9a"></div>
<div class="a" style="left:1390px;top:650px;width:1px;height:4px;background:#7a7a7a"></div>
<div class="a" style="left:1401px;top:650px;width:1px;height:4px;background:#7a7a7a"></div>
<div class="a" style="left:1412px;top:650px;width:1px;height:4px;background:#7a7a7a"></div>
<div class="a" style="left:1423px;top:650px;width:1px;height:4px;background:#7a7a7a"></div>
<div class="a" style="left:1434px;top:646px;width:1px;height:8px;background:#9a9a9a"></div>
<div class="a" style="left:1445px;top:650px;width:1px;height:4px;background:#7a7a7a"></div>
<div class="a" style="left:1456px;top:650px;width:1px;height:4px;background:#7a7a7a"></div>
<div class="a" style="left:1466px;top:650px;width:1px;height:4px;background:#7a7a7a"></div>
<div class="a" style="left:1477px;top:650px;width:1px;height:4px;background:#7a7a7a"></div>
<div class="a" style="left:1488px;top:646px;width:1px;height:8px;background:#9a9a9a"></div>
<div class="a" style="left:1499px;top:650px;width:1px;height:4px;background:#7a7a7a"></div>
<div class="a" style="left:1510px;top:650px;width:1px;height:4px;background:#7a7a7a"></div>
<div class="a" style="left:1521px;top:650px;width:1px;height:4px;background:#7a7a7a"></div>
<div class="a" style="left:1532px;top:650px;width:1px;height:4px;background:#7a7a7a"></div>
<div class="a" style="left:1542px;top:646px;width:1px;height:8px;background:#9a9a9a"></div>
<div class="a" style="left:1553px;top:650px;width:1px;height:4px;background:#7a7a7a"></div>
<div class="a" style="left:1564px;top:650px;width:1px;height:4px;background:#7a7a7a"></div>
<div class="a" style="left:1575px;top:650px;width:1px;height:4px;background:#7a7a7a"></div>
<div class="a" style="left:1586px;top:650px;width:1px;height:4px;background:#7a7a7a"></div>
<div class="a" style="left:1597px;top:646px;width:1px;height:8px;background:#9a9a9a"></div>
<div class="a" style="left:1608px;top:650px;width:1px;height:4px;background:#7a7a7a"></div>
<div class="a" style="left:1619px;top:650px;width:1px;height:4px;background:#7a7a7a"></div>
<div class="a" style="left:1629px;top:650px;width:1px;height:4px;background:#7a7a7a"></div>
<div class="a" style="left:1640px;top:650px;width:1px;height:4px;background:#7a7a7a"></div>
<div class="a" style="left:1651px;top:646px;width:1px;height:8px;background:#9a9a9a"></div>
<div class="a" style="left:1662px;top:650px;width:1px;height:4px;background:#7a7a7a"></div>
<div class="a" style="left:1673px;top:650px;width:1px;height:4px;background:#7a7a7a"></div>
<div class="a" style="left:1684px;top:650px;width:1px;height:4px;background:#7a7a7a"></div>
<div class="a" style="left:1695px;top:650px;width:1px;height:4px;background:#7a7a7a"></div>
<div class="a" style="left:1705px;top:646px;width:1px;height:8px;background:#9a9a9a"></div>
<div class="a" style="left:1716px;top:650px;width:1px;height:4px;background:#7a7a7a"></div>
<div class="a" style="left:1727px;top:650px;width:1px;height:4px;background:#7a7a7a"></div>
<div class="a" style="left:1738px;top:650px;width:1px;height:4px;background:#7a7a7a"></div>
<div class="a" style="left:1749px;top:650px;width:1px;height:4px;background:#7a7a7a"></div>
<div class="a" style="left:1760px;top:646px;width:1px;height:8px;background:#9a9a9a"></div>
<div class="a" style="left:1771px;top:650px;width:1px;height:4px;background:#7a7a7a"></div>
<div class="a" style="left:1781px;top:650px;width:1px;height:4px;background:#7a7a7a"></div>
<div class="a" style="left:1792px;top:650px;width:1px;height:4px;background:#7a7a7a"></div>
<div class="a" style="left:1803px;top:650px;width:1px;height:4px;background:#7a7a7a"></div>
<div class="a" style="left:1814px;top:646px;width:1px;height:8px;background:#9a9a9a"></div>
<div class="a" style="left:1825px;top:650px;width:1px;height:4px;background:#7a7a7a"></div>
<div class="a" style="left:1836px;top:650px;width:1px;height:4px;background:#7a7a7a"></div>
<div class="a" style="left:1847px;top:650px;width:1px;height:4px;background:#7a7a7a"></div>
<div class="a" style="left:1857px;top:650px;width:1px;height:4px;background:#7a7a7a"></div>
<div class="a" style="left:1868px;top:646px;width:1px;height:8px;background:#9a9a9a"></div>
<div class="a" style="left:1879px;top:650px;width:1px;height:4px;background:#7a7a7a"></div>
<div class="a" style="left:1890px;top:650px;width:1px;height:4px;background:#7a7a7a"></div>
<div class="a" style="left:1901px;top:650px;width:1px;height:4px;background:#7a7a7a"></div>
<div class="a" style="left:1912px;top:650px;width:1px;height:4px;background:#7a7a7a"></div>
<div class="t" style="top:629px;left:798.25px;width:400px;text-align:center;color:#d6d6d6;font-size:13px;letter-spacing:-0.6px">0</div>
<div class="t" style="top:629px;left:853.25px;width:400px;text-align:center;color:#d6d6d6;font-size:13px;letter-spacing:-0.6px">15</div>
<div class="t" style="top:629px;left:908.25px;width:400px;text-align:center;color:#d6d6d6;font-size:13px;letter-spacing:-0.6px">30</div>
<div class="t" style="top:629px;left:962.25px;width:400px;text-align:center;color:#d6d6d6;font-size:13px;letter-spacing:-0.6px">45</div>
<div class="t" style="top:629px;left:1016.25px;width:400px;text-align:center;color:#d6d6d6;font-size:13px;letter-spacing:-0.6px">60</div>
<div class="t" style="top:629px;left:1070.25px;width:400px;text-align:center;color:#d6d6d6;font-size:13px;letter-spacing:-0.6px">75</div>
<div class="t" style="top:629px;left:1125.25px;width:400px;text-align:center;color:#d6d6d6;font-size:13px;letter-spacing:-0.6px">90</div>
<div class="t" style="top:629px;left:1179.25px;width:400px;text-align:center;color:#d6d6d6;font-size:13px;letter-spacing:-0.6px">105</div>
<div class="t" style="top:629px;left:1233.25px;width:400px;text-align:center;color:#d6d6d6;font-size:13px;letter-spacing:-0.6px">120</div>
<div class="t" style="top:629px;left:1288.25px;width:400px;text-align:center;color:#d6d6d6;font-size:13px;letter-spacing:-0.6px">135</div>
<div class="t" style="top:629px;left:1342.25px;width:400px;text-align:center;color:#d6d6d6;font-size:13px;letter-spacing:-0.6px">150</div>
<div class="t" style="top:629px;left:1396.25px;width:400px;text-align:center;color:#d6d6d6;font-size:13px;letter-spacing:-0.6px">165</div>
<div class="t" style="top:629px;left:1451.25px;width:400px;text-align:center;color:#d6d6d6;font-size:13px;letter-spacing:-0.6px">180</div>
<div class="t" style="top:629px;left:1505.25px;width:400px;text-align:center;color:#d6d6d6;font-size:13px;letter-spacing:-0.6px">195</div>
<div class="t" style="top:629px;left:1559.25px;width:400px;text-align:center;color:#d6d6d6;font-size:13px;letter-spacing:-0.6px">210</div>
<div class="t" style="top:629px;left:1614.25px;width:400px;text-align:center;color:#d6d6d6;font-size:13px;letter-spacing:-0.6px">225</div>
<div class="t" style="top:629px;left:1668.25px;width:400px;text-align:center;color:#d6d6d6;font-size:13px;letter-spacing:-0.6px">240</div>
<div class="a" style="left:1000px;top:654px;width:905px;height:16px;background:#454545"></div>
<div class="a" style="left:995px;top:653px;width:5px;height:18px;background:#6cc4ad;border-radius:1px"></div>
<div class="a" style="left:1905px;top:653px;width:5px;height:18px;background:#6cc4ad;border-radius:1px"></div>
<div class="a" style="left:991px;top:673px;width:923px;height:20px;background:#2d2d2d"></div>
<div class="a" style="left:1000px;top:674px;width:905px;height:18px;background:repeating-linear-gradient(135deg,#8af9b2 0,#79e6a2 1.6px,#79e6a2 11.00px,#8af9b2 12.60px,#69ce90 14.20px,#69ce90 23.61px,#8af9b2 25.21px)"></div>
<div class="t" style="top:673px;left:1008.3px;color:#1a1a1a;letter-spacing:-0.38px">Color Array</div>
<div class="a" style="left:1000px;top:696px;width:905px;height:18px;background:repeating-linear-gradient(135deg,#e2fd90 0,#cdf082 1.6px,#cdf082 11.00px,#e2fd90 12.60px,#b8da72 14.20px,#b8da72 23.61px,#e2fd90 25.21px)"></div>
<div class="t" style="top:695px;left:1008.3px;color:#1a1a1a;letter-spacing:-0.74px">Random [Index]</div>
<div class="a" style="left:1000px;top:718px;width:905px;height:18px;background:repeating-linear-gradient(135deg,#e2fd90 0,#cdf082 1.6px,#cdf082 11.00px,#e2fd90 12.60px,#b8da72 14.20px,#b8da72 23.61px,#e2fd90 25.21px)"></div>
<div class="t" style="top:717px;left:1008.3px;color:#1a1a1a;letter-spacing:-0.52px">Oscillator [Position.Z] Cosine</div>
<div class="a" style="left:1000px;top:740px;width:905px;height:18px;background:repeating-linear-gradient(135deg,#e2fd90 0,#cdf082 1.6px,#cdf082 11.00px,#e2fd90 12.60px,#b8da72 14.20px,#b8da72 23.61px,#e2fd90 25.21px)"></div>
<div class="t" style="top:739px;left:1008.3px;color:#1a1a1a;letter-spacing:-0.49px">Oscillator [Position.X] Sine Driver</div>
<div class="a" style="left:1000px;top:762px;width:905px;height:18px;background:repeating-linear-gradient(135deg,#7cacfe 0,#6b97ee 1.6px,#6b97ee 11.00px,#7cacfe 12.60px,#5f87d8 14.20px,#5f87d8 23.61px,#7cacfe 25.21px)"></div>
<div class="t" style="top:761px;left:1008.3px;color:#ffffff;letter-spacing:-0.53px;text-shadow:0 0 0.5px #fff">Index Context [Number]</div>
<div class="a" style="left:1000px;top:784px;width:905px;height:18px;background:repeating-linear-gradient(135deg,#7cacfe 0,#6b97ee 1.6px,#6b97ee 11.00px,#7cacfe 12.60px,#5f87d8 14.20px,#5f87d8 23.61px,#7cacfe 25.21px)"></div>
<div class="t" style="top:783px;left:1008.3px;color:#ffffff;letter-spacing:-0.49px;text-shadow:0 0 0.5px #fff">String Generator [String]</div>
<div class="a" style="left:1000px;top:806px;width:905px;height:18px;background:repeating-linear-gradient(135deg,#d6fc90 0,#c2ec7c 1.6px,#c2ec7c 11.00px,#d6fc90 12.60px,#abd66a 14.20px,#abd66a 23.61px,#d6fc90 25.21px)"></div>
<div class="t" style="top:805px;left:1008.3px;color:#1a1a1a;letter-spacing:-0.29px">3D Matrix [Duplicator]</div>
<div class="a" style="left:1000px;top:828px;width:905px;height:18px;background:#fff;border-radius:3px"></div>
<div class="a" style="left:1001px;top:829px;width:903px;height:16px;background:#fdef92;border-radius:2px;background-image:radial-gradient(circle at 1.5px 1.5px,#d8be52 0.7px,rgba(216,190,82,0) 1.4px),radial-gradient(circle at 4.5px 4.5px,#d8be52 0.7px,rgba(216,190,82,0) 1.4px);background-size:6px 6px"></div>
<div class="t" style="top:827px;left:1008.3px;color:#1a1a1a;letter-spacing:-0.33px">Duplicator</div>
<div class="a" style="left:1000px;top:850px;width:905px;height:18px;background:#ffe680;border-radius:3px"></div>
<div class="t" style="top:849px;left:1008.3px;color:#1a1a1a;letter-spacing:-0.96px">Ellipse Shape</div>
<div class="a" style="left:1000px;top:872px;width:905px;height:18px;background:#b794ff;border-radius:3px"></div>
<div class="t" style="top:871px;left:1008.3px;color:#ffffff;letter-spacing:-0.7px;text-shadow:0 0 0.5px #fff">Cavalry</div>
<div class="a" style="left:1553px;top:652px;width:2px;height:310px;background:rgba(112,200,176,0.62)"></div>
<svg class="a" style="left:1546.4px;top:643.4px" width="15" height="10" viewBox="0 0 15 10"><path d="M0.5 0.2H14.700L8.100 9.600H7.100Z" fill="#74c7ad"/></svg>
<div class="a" style="left:991px;top:963px;width:923px;height:12px;background:#2e2e2e"></div>
<div class="a" style="left:992px;top:964px;width:921px;height:10px;background:#4e4e4e;border-radius:5px"></div>
<div class="a" style="left:991px;top:976px;width:923px;height:22px;background:#454545"></div>
<div class="a" style="left:994px;top:977px;width:18px;height:20px;background:#2a2a2a;border-radius:4px;border:1px solid #555"></div>
<svg class="a" style="left:996px;top:981px" width="14" height="13" viewBox="0 0 14 13"><path d="M0 1H14M0 5H12M0 9H5M7 9H9M11 9H13" stroke="#e0e0e0" stroke-width="1.4"/><path d="M14 13V10.500L11.500 13Z" fill="#2ecc71"/></svg>
<div class="a" style="left:1015px;top:979px;width:150px;height:16px;background:#2a2a2a;border-radius:3px"></div>
<div class="t" style="top:978px;left:1017px;color:#e8e8e8;letter-spacing:-0.64px">Default Keyframe Layer</div>
<div class="a" style="left:1171px;top:979px;width:70px;height:16px;background:#2a2a2a;border-radius:3px"></div>
<div class="t" style="top:978px;left:1176px;color:#4a4a4a">F</div>
<div class="t" style="top:978px;left:1188px;color:#e8e8e8">-</div>
<div class="t" style="top:978px;left:1247px;color:#e8e8e8;letter-spacing:-0.5px">Align:</div>
<div class="a" style="left:1283px;top:978px;width:52px;height:18px;background:#262626;border-radius:3px;border:1px solid #5a5a5a"></div>
<div class="a" style="left:1300px;top:979px;width:1px;height:16px;background:#5a5a5a"></div>
<div class="a" style="left:1317px;top:979px;width:1px;height:16px;background:#5a5a5a"></div>
<svg class="a" style="left:1286px;top:981px" width="12" height="12" viewBox="0 0 12 12"><path d="M1 0V12" stroke="#e8e8e8" stroke-width="1.2"/><path d="M3 3H5M7 3H11M3 9H11" stroke="#e8e8e8" stroke-width="1.500"/></svg>
<svg class="a" style="left:1303px;top:981px" width="12" height="12" viewBox="0 0 12 12"><path d="M6 0V12" stroke="#6cc4ad" stroke-width="1.2"/><path d="M1 3H4M8 3H11M0.5 9H4.500M7.500 9H11.500" stroke="#e8e8e8" stroke-width="1.500"/></svg>
<svg class="a" style="left:1320px;top:981px" width="12" height="12" viewBox="0 0 12 12"><path d="M11 0V12" stroke="#e8e8e8" stroke-width="1.2"/><path d="M1 3H5M7 3H9M1 9H9" stroke="#e8e8e8" stroke-width="1.500"/></svg>
<div class="a" style="left:1340px;top:978px;width:18px;height:18px;background:#262626;border-radius:3px;border:1px solid #5a5a5a"></div>
<svg class="a" style="left:1343px;top:981px" width="12" height="12" viewBox="0 0 12 12"><rect x="1.500" y="1.500" width="9" height="9" fill="none" stroke="#e8e8e8" stroke-width="1" stroke-dasharray="3 1.500"/><rect x="5" y="5" width="2" height="2" fill="#e8e8e8"/></svg>
<div class="a" style="left:1361px;top:977px;width:31px;height:20px;background:#3a3a3a;border-radius:4px;border:1px solid #505050"></div>
<div class="a" style="left:1361px;top:977px;width:19px;height:20px;background:#2a2a2a;border-radius:4px 0 0 4px;border:1px solid #505050"></div>
<svg class="a" style="left:1363.5px;top:979.5px" width="15" height="15" viewBox="0 0 15 15"><g transform="rotate(45 7.5 7.5)"><path d="M3 13V6.500A4.500 4.500 0 0 1 12 6.500V13H9V6.500A1.500 1.500 0 0 0 6 6.500V13Z" fill="#e0e0e0"/><path d="M3 10.500H6M9 10.500H12" stroke="#2c2c2c" stroke-width="1"/></g></svg>
<svg class="a" style="left:1383px;top:983px" width="6" height="8" viewBox="0 0 6 8"><path d="M0.8 0.8L5.200 4L0.8 7.200Z" fill="none" stroke="#a0a0a0" stroke-width="0.9"/></svg>
<div class="a" style="left:1396px;top:977px;width:31px;height:20px;background:#3a3a3a;border-radius:4px;border:1px solid #505050"></div>
<div class="a" style="left:1396px;top:977px;width:19px;height:20px;background:#2a2a2a;border-radius:4px 0 0 4px;border:1px solid #505050"></div>
<svg class="a" style="left:1399px;top:981px" width="14" height="12" viewBox="0 0 14 12"><path d="M0 6H14" stroke="#e8e8e8" stroke-width="1" stroke-dasharray="3 1.5"/><path d="M4 1.500V10.500M7 3.500V8.500M10 4.500V7.500" stroke="#e8e8e8" stroke-width="1"/></svg>
<svg class="a" style="left:1418px;top:983px" width="6" height="8" viewBox="0 0 6 8"><path d="M0.8 0.8L5.200 4L0.8 7.200Z" fill="none" stroke="#a0a0a0" stroke-width="0.9"/></svg>
<svg class="a" style="left:1743px;top:980px" width="15" height="15" viewBox="0 0 15 15"><circle cx="6.500" cy="6.500" r="5.500" fill="none" stroke="#d0d0d0" stroke-width="1"/><path d="M4 6.500H9" stroke="#d0d0d0" stroke-width="1"/><path d="M10.500 10.500L12.500 12.500" stroke="#d0d0d0" stroke-width="1.800"/></svg>
<div class="a" style="left:1772px;top:985px;width:110px;height:4px;background:#505050;border-radius:2px"></div>
<svg class="a" style="left:1761.5px;top:981.5px" width="11" height="11" viewBox="0 0 11 11"><circle cx="5.500" cy="5.500" r="5" fill="#6fcfb0"/><circle cx="5.500" cy="5.500" r="2" fill="#4aa88c"/></svg>
<svg class="a" style="left:1887px;top:980px" width="15" height="15" viewBox="0 0 15 15"><circle cx="6.500" cy="6.500" r="5.500" fill="none" stroke="#d0d0d0" stroke-width="1"/><path d="M4 6.500H9M6.500 4V9" stroke="#d0d0d0" stroke-width="1"/><path d="M10.500 10.500L12.500 12.500" stroke="#d0d0d0" stroke-width="1.800"/></svg>
<div class="a" style="left:494px;top:1003px;width:1420px;height:23px;background:#3c3c3c"></div>
<svg class="a" style="left:498px;top:1008px" width="3" height="14" viewBox="0 0 3 14"><rect x="0" y="0" width="2" height="2" fill="#8a8a8a"/><rect x="0" y="5" width="2" height="2" fill="#8a8a8a"/><rect x="0" y="10" width="2" height="2" fill="#8a8a8a"/></svg>
<div class="a" style="left:506px;top:1005px;width:19px;height:20px;background:#2a2a2a;border-radius:4px;border:1px solid #505050"></div>
<svg class="a" style="left:509px;top:1008px" width="14" height="14" viewBox="0 0 14 14"><path d="M0.5 0.5H11.500V9.500H9V12.500L6 9.500H0.5Z" fill="#e0e0e0"/><path d="M2.500 3H9.500M2.500 5H9.500M2.500 7H9.500" stroke="#555" stroke-width="0.9"/><path d="M14 14V11.500L11.500 14Z" fill="#2ecc71"/></svg>
<div class="a" style="left:528px;top:1008px;width:18px;height:14px;background:#2ecc71;border-radius:2px"></div>
<div class="t" style="top:1005px;left:337.25px;width:400px;text-align:center;color:#1a1a1a;font-size:12px">0</div>
<div class="a" style="left:554px;top:1012px;width:6px;height:6px;background:#2ecc71;border-radius:3px"></div>
<div class="t" style="top:1005px;left:565.2px;color:#e8e8e8">Connected: <span style="color:#d66be8">Oscillator [Position.X] Sine Driver</span> to <span style="color:#e0c060">Oscillator [Position.Z] Cosine.</span></div>
<div class="a" style="left:1610px;top:1006px;width:80px;height:18px;background:#d0b862;border-radius:2px"></div>
<div class="t" style="top:1006px;left:1615.7px;color:#2a2a2a;letter-spacing:-1.14px">Feedback</div>
<svg class="a" style="left:1671px;top:1008px" width="13" height="14" viewBox="0 0 13 14"><path d="M1 0.5H8L11 3.500V13.500H1Z" fill="#f4f4f4" stroke="#58c060" stroke-width="0.8"/><path d="M3 5H9M3 7.500H9M3 10H7" stroke="#c0c0c0" stroke-width="0.8"/><path d="M6 11L12 4.500L13 5.500L7.500 12Z" fill="#f08030"/></svg>
<div class="a" style="left:1693px;top:1006px;width:109px;height:18px;background:#2ecc71;border-radius:2px"></div>
<div class="t" style="top:1006px;left:1698.7px;color:#1a1a1a;letter-spacing:-0.73px">Upgrade to Pro</div>
<svg class="a" style="left:1782px;top:1009px" width="14" height="12" viewBox="0 0 14 12"><path d="M1 11Q0 6 3 2L5 3L6 11Z" fill="#f4c030"/><path d="M13 11Q14 6 11 2L9 3L8 11Z" fill="#f4c030"/></svg>
<div class="a" style="left:1805px;top:1006px;width:106px;height:18px;background:#3aaef0;border-radius:2px"></div>
<div class="t" style="top:1006px;left:1810.5px;color:#1a1a1a;letter-spacing:-0.8px">Tips and Tricks</div>
<svg class="a" style="left:1891px;top:1008px" width="14" height="14" viewBox="0 0 14 14"><path d="M13 1Q8 1 5 5L3 9L5 11L9 9Q13 6 13 1Z" fill="#e8e8f0"/><path d="M13 1Q10.500 1 9 2L12 5Q13 3.500 13 1Z" fill="#e04040"/><circle cx="9" cy="5" r="1.300" fill="#60a0e0"/><path d="M3 9L1 13L5 11Z" fill="#f08030"/><path d="M5 5L2 6L3.500 8ZM9 9L8 12L6 10.500Z" fill="#e04040"/></svg>
</body></html>
